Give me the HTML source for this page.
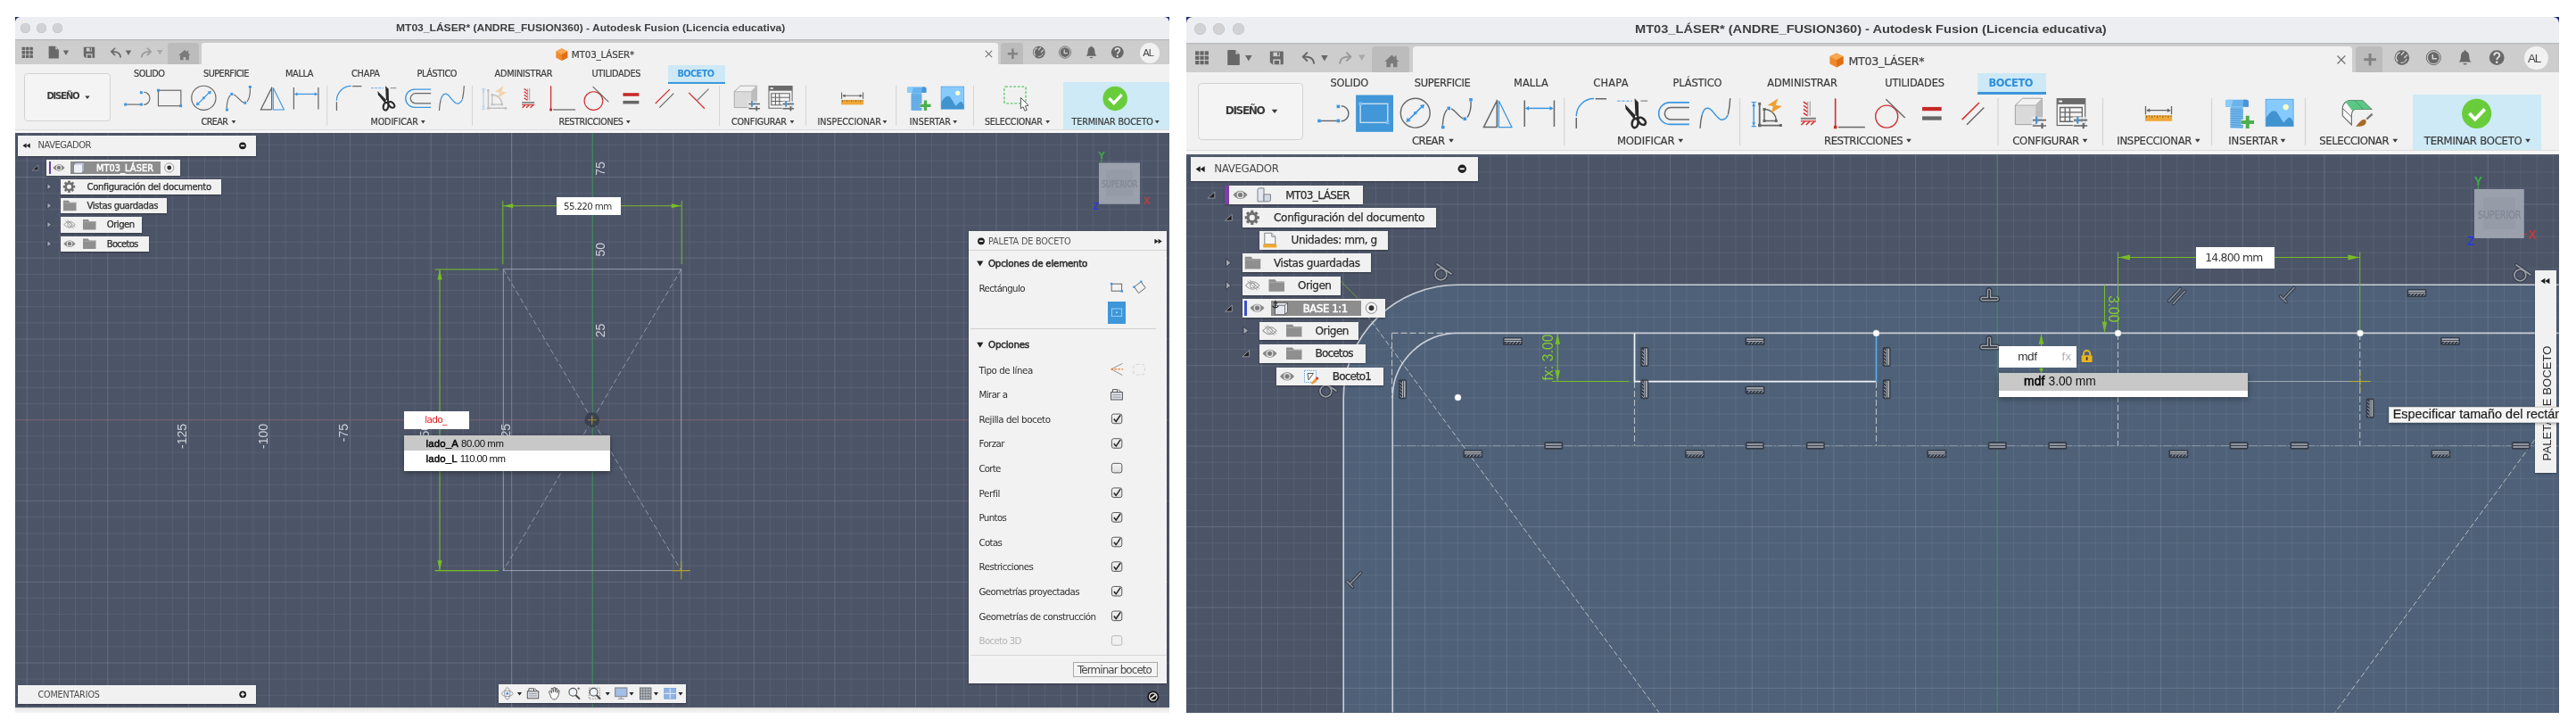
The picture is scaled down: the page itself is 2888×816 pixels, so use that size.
<!DOCTYPE html>
<html lang="es"><head><meta charset="utf-8"><title>MT03_LÁSER - Autodesk Fusion</title>
<style>
html,body{margin:0;padding:0;background:#fff;}
body{width:2888px;height:816px;position:relative;overflow:hidden;font-family:"Liberation Sans",sans-serif;}
svg{overflow:visible;}
</style></head><body>
<div class="win" style="position:absolute;left:0;top:0;width:2888px;height:816px;will-change:transform;clip-path:inset(19.30px 1577.50px 17.00px 17.00px);">
<div style="position:absolute;left:17.00px;top:148.40px;width:1293.50px;height:644.20px;background:#4c5568;"></div>
<div style="position:absolute;left:17.00px;top:792.60px;width:1293.50px;height:6.40px;background:linear-gradient(#d9d9d9,#eeeeee 45%,#f2f2f2);"></div>
<svg style="position:absolute;left:0.00px;top:0.00px;" width="2888.00" height="816.00" viewBox="0 0 2888 816"><path d="M48.39 148.40V792.60M66.50 148.40V792.60M84.62 148.40V792.60M102.73 148.40V792.60M138.95 148.40V792.60M157.06 148.40V792.60M175.18 148.40V792.60M193.29 148.40V792.60M229.51 148.40V792.60M247.62 148.40V792.60M265.74 148.40V792.60M283.85 148.40V792.60M320.07 148.40V792.60M338.18 148.40V792.60M356.30 148.40V792.60M374.41 148.40V792.60M410.63 148.40V792.60M428.74 148.40V792.60M446.86 148.40V792.60M464.97 148.40V792.60M501.19 148.40V792.60M519.30 148.40V792.60M537.42 148.40V792.60M555.53 148.40V792.60M591.75 148.40V792.60M609.86 148.40V792.60M627.98 148.40V792.60M646.09 148.40V792.60M682.31 148.40V792.60M700.42 148.40V792.60M718.54 148.40V792.60M736.65 148.40V792.60M772.87 148.40V792.60M790.98 148.40V792.60M809.10 148.40V792.60M827.21 148.40V792.60M863.43 148.40V792.60M881.54 148.40V792.60M899.66 148.40V792.60M917.77 148.40V792.60M953.99 148.40V792.60M972.10 148.40V792.60M990.22 148.40V792.60M1008.33 148.40V792.60M1044.55 148.40V792.60M1062.66 148.40V792.60M1080.78 148.40V792.60M1098.89 148.40V792.60M1135.11 148.40V792.60M1153.22 148.40V792.60M1171.34 148.40V792.60M1189.45 148.40V792.60M1225.67 148.40V792.60M1243.78 148.40V792.60M1261.90 148.40V792.60M1280.01 148.40V792.60M17.00 162.20H1310.50M17.00 180.35H1310.50M17.00 216.65H1310.50M17.00 234.80H1310.50M17.00 252.95H1310.50M17.00 271.10H1310.50M17.00 307.40H1310.50M17.00 325.55H1310.50M17.00 343.70H1310.50M17.00 361.85H1310.50M17.00 398.15H1310.50M17.00 416.30H1310.50M17.00 434.45H1310.50M17.00 452.60H1310.50M17.00 488.90H1310.50M17.00 507.05H1310.50M17.00 525.20H1310.50M17.00 543.35H1310.50M17.00 579.65H1310.50M17.00 597.80H1310.50M17.00 615.95H1310.50M17.00 634.10H1310.50M17.00 670.40H1310.50M17.00 688.55H1310.50M17.00 706.70H1310.50M17.00 724.85H1310.50M17.00 761.15H1310.50M17.00 779.30H1310.50" stroke="#fff" stroke-opacity="0.072" stroke-width="1" fill="none"/><path d="M30.28 148.40V792.60M120.84 148.40V792.60M211.40 148.40V792.60M301.96 148.40V792.60M392.52 148.40V792.60M483.08 148.40V792.60M573.64 148.40V792.60M664.20 148.40V792.60M754.76 148.40V792.60M845.32 148.40V792.60M935.88 148.40V792.60M1026.44 148.40V792.60M1117.00 148.40V792.60M1207.56 148.40V792.60M1298.12 148.40V792.60M17.00 198.50H1310.50M17.00 289.25H1310.50M17.00 380.00H1310.50M17.00 470.75H1310.50M17.00 561.50H1310.50M17.00 652.25H1310.50M17.00 743.00H1310.50" stroke="#fff" stroke-opacity="0.135" stroke-width="1" fill="none"/><path d="M664.4 148.4V792.6" stroke="#3d8a5a" stroke-width="1"/><path d="M17 470.75H1310.5" stroke="#9a5560" stroke-opacity="0.5" stroke-width="1"/><text transform="translate(677.5 196.75) rotate(-90)" font-family="Liberation Sans, sans-serif" font-size="14" fill="#ccd0d8">75</text><text transform="translate(677.5 287.50) rotate(-90)" font-family="Liberation Sans, sans-serif" font-size="14" fill="#ccd0d8">50</text><text transform="translate(677.5 378.25) rotate(-90)" font-family="Liberation Sans, sans-serif" font-size="14" fill="#ccd0d8">25</text><text transform="translate(208.85 475) rotate(-90)" text-anchor="end" font-family="Liberation Sans, sans-serif" font-size="14" fill="#ccd0d8">-125</text><text transform="translate(299.60 475) rotate(-90)" text-anchor="end" font-family="Liberation Sans, sans-serif" font-size="14" fill="#ccd0d8">-100</text><text transform="translate(390.35 475) rotate(-90)" text-anchor="end" font-family="Liberation Sans, sans-serif" font-size="14" fill="#ccd0d8">-75</text><text transform="translate(481.10 475) rotate(-90)" text-anchor="end" font-family="Liberation Sans, sans-serif" font-size="14" fill="#ccd0d8">-50</text><text transform="translate(571.85 475) rotate(-90)" text-anchor="end" font-family="Liberation Sans, sans-serif" font-size="14" fill="#ccd0d8">-25</text><rect x="564.25" y="301.75" width="199.5" height="337.85" fill="none" stroke="#aeb6c2" stroke-opacity="0.85" stroke-width="0.9"/><path d="M573.75 148.4V792.6" stroke="#fff" stroke-opacity="0.14" stroke-width="1"/><path d="M564.25 301.75L763.75 639.6M763.75 301.75L564.25 639.6" fill="none" stroke="#aab1bc" stroke-opacity="0.8" stroke-width="0.9" stroke-dasharray="6 3.5"/><circle cx="663.75" cy="470.75" r="8.4" fill="#383d4a" fill-opacity="0.85"/><path d="M658.75 470.75H668.75M663.75 465.75V475.75" stroke="#a8923c" stroke-width="1.1"/><path d="M563.75 225V296.25M764.25 225V296.25M563.75 230.75H764.25" stroke="#77bd27" stroke-width="1" fill="none"/><path d="M564.20 230.75L575.20 228.15L575.20 233.35Z" fill="#77bd27"/><path d="M763.80 230.75L752.80 233.35L752.80 228.15Z" fill="#77bd27"/><path d="M487.5 302H558.75M487.5 639.6H558.75M493 302V639.6" stroke="#77bd27" stroke-width="1.1" fill="none"/><path d="M493.00 302.40L495.60 313.40L490.40 313.40Z" fill="#77bd27"/><path d="M493.00 639.20L490.40 628.20L495.60 628.20Z" fill="#77bd27"/><path d="M753.75 639.6H773.75M763.75 629.6V649.6" stroke="#b0a030" stroke-width="1.1"/></svg>
<div style="position:absolute;left:623.75px;top:221.25px;width:72.50px;height:20.00px;background:#fff;"></div>
<span style='position:absolute;left:632.00px;top:225.27px;font:10.29px/12.35px "DejaVu Sans","Liberation Sans",sans-serif;letter-spacing:-0.633px;color:#333;white-space:nowrap;'>55.220 mm</span>
<div style="position:absolute;left:453.00px;top:460.75px;width:72.75px;height:20.00px;background:#fff;"></div>
<span style='position:absolute;left:476.25px;top:463.72px;font:10.60px/12.72px "DejaVu Sans","Liberation Sans",sans-serif;letter-spacing:-0.739px;color:#e02222;white-space:nowrap;'>lado_</span>
<div style="position:absolute;left:453.00px;top:487.50px;width:230.75px;height:40.50px;background:#fff;box-shadow:0 2px 6px rgba(0,0,0,0.35);"></div>
<div style="position:absolute;left:453.00px;top:487.50px;width:230.75px;height:17.50px;background:#c8c8c8;"></div>
<span style='position:absolute;left:477.50px;top:490.66px;font:11.40px/13.68px "Liberation Sans",sans-serif;letter-spacing:0.000px;color:#000;white-space:nowrap;-webkit-text-stroke:0.45px #000;letter-spacing:0.2px;'>lado_A</span>
<span style='position:absolute;left:517.00px;top:490.66px;font:11.40px/13.68px "Liberation Sans",sans-serif;letter-spacing:-0.384px;color:#111;white-space:nowrap;'>80.00 mm</span>
<span style='position:absolute;left:477.50px;top:508.16px;font:11.40px/13.68px "Liberation Sans",sans-serif;letter-spacing:0.000px;color:#000;white-space:nowrap;-webkit-text-stroke:0.45px #000;letter-spacing:0.2px;'>lado_L</span>
<span style='position:absolute;left:515.73px;top:508.16px;font:11.40px/13.68px "Liberation Sans",sans-serif;letter-spacing:-0.615px;color:#111;white-space:nowrap;'>110.00 mm</span>
<div style="position:absolute;left:20.00px;top:152.00px;width:267.00px;height:22.50px;background:#f1f1f1;box-shadow:0 0.5px 2px rgba(0,0,0,0.35);"></div>
<span style='position:absolute;left:42.50px;top:157.09px;font:9.95px/11.93px "DejaVu Sans","Liberation Sans",sans-serif;letter-spacing:-0.450px;color:#4a4a4a;white-space:nowrap;'>NAVEGADOR</span>
<div style="position:absolute;left:52.00px;top:179.25px;width:150.00px;height:17.50px;background:#f1f1f1;box-shadow:0 0.5px 2px rgba(0,0,0,0.35);"></div>
<div style="position:absolute;left:54.50px;top:180.58px;width:2.20px;height:14.85px;background:#6a3fa6;"></div>
<div style="position:absolute;left:78.75px;top:180.66px;width:100.75px;height:14.52px;background:#8d8d8d;"></div>
<span style='position:absolute;left:108.00px;top:183.23px;font:9.74px/11.69px "DejaVu Sans","Liberation Sans",sans-serif;letter-spacing:0.104px;color:#fff;white-space:nowrap;-webkit-text-stroke:0.5px #fff;'>MT03_LÁSER</span>
<div style="position:absolute;left:68.00px;top:200.50px;width:179.75px;height:17.50px;background:#f1f1f1;box-shadow:0 0.5px 2px rgba(0,0,0,0.35);"></div>
<span style='position:absolute;left:97.50px;top:203.51px;font:10.15px/12.18px "DejaVu Sans","Liberation Sans",sans-serif;letter-spacing:-0.378px;color:#2c2c2c;white-space:nowrap;-webkit-text-stroke:0.25px #2c2c2c;'>Configuración del documento</span>
<div style="position:absolute;left:68.00px;top:221.75px;width:118.75px;height:17.50px;background:#f1f1f1;box-shadow:0 0.5px 2px rgba(0,0,0,0.35);"></div>
<span style='position:absolute;left:97.50px;top:224.76px;font:10.15px/12.18px "DejaVu Sans","Liberation Sans",sans-serif;letter-spacing:-0.467px;color:#2c2c2c;white-space:nowrap;-webkit-text-stroke:0.25px #2c2c2c;'>Vistas guardadas</span>
<div style="position:absolute;left:68.00px;top:243.00px;width:91.25px;height:17.50px;background:#f1f1f1;box-shadow:0 0.5px 2px rgba(0,0,0,0.35);"></div>
<span style='position:absolute;left:119.75px;top:246.01px;font:10.15px/12.18px "DejaVu Sans","Liberation Sans",sans-serif;letter-spacing:-0.521px;color:#2c2c2c;white-space:nowrap;-webkit-text-stroke:0.25px #2c2c2c;'>Origen</span>
<div style="position:absolute;left:68.00px;top:264.50px;width:98.75px;height:17.50px;background:#f1f1f1;box-shadow:0 0.5px 2px rgba(0,0,0,0.35);"></div>
<span style='position:absolute;left:119.75px;top:267.51px;font:10.15px/12.18px "DejaVu Sans","Liberation Sans",sans-serif;letter-spacing:-0.788px;color:#2c2c2c;white-space:nowrap;-webkit-text-stroke:0.25px #2c2c2c;'>Bocetos</span>
<div style="position:absolute;left:20.30px;top:768.00px;width:266.60px;height:21.00px;background:#f1f1f1;box-shadow:0 0.5px 2px rgba(0,0,0,0.35);"></div>
<span style='position:absolute;left:42.40px;top:772.52px;font:9.60px/11.52px "DejaVu Sans","Liberation Sans",sans-serif;letter-spacing:-0.104px;color:#4a4a4a;white-space:nowrap;'>COMENTARIOS</span>
<div style="position:absolute;left:558.75px;top:766.75px;width:210.50px;height:21.25px;background:#f1f1f1;box-shadow:0 0.5px 2px rgba(0,0,0,0.35);"></div>
<div style="position:absolute;left:1085.75px;top:259.00px;width:222.25px;height:507.40px;background:#f2f2f2;box-shadow:0 0.5px 2px rgba(0,0,0,0.35);"></div>
<div style="position:absolute;left:1085.75px;top:280.40px;width:222.25px;height:1.00px;background:#d4d4d4;"></div>
<span style='position:absolute;left:1108.00px;top:265.09px;font:9.74px/11.69px "DejaVu Sans","Liberation Sans",sans-serif;letter-spacing:-0.213px;color:#565656;white-space:nowrap;'>PALETA DE BOCETO</span>
<span style='position:absolute;left:1108.00px;top:289.17px;font:10.29px/12.35px "DejaVu Sans","Liberation Sans",sans-serif;letter-spacing:-0.225px;color:#303030;white-space:nowrap;-webkit-text-stroke:0.55px #303030;'>Opciones de elemento</span>
<span style='position:absolute;left:1097.50px;top:316.52px;font:10.29px/12.35px "DejaVu Sans","Liberation Sans",sans-serif;letter-spacing:-0.637px;color:#2f2f2f;white-space:nowrap;'>Rectángulo</span>
<div style="position:absolute;left:1241.75px;top:338.00px;width:20.50px;height:25.00px;background:#3f97da;"></div>
<div style="position:absolute;left:1088.00px;top:368.30px;width:207.50px;height:1.00px;background:#cfcfcf;"></div>
<span style='position:absolute;left:1108.00px;top:380.47px;font:10.29px/12.35px "DejaVu Sans","Liberation Sans",sans-serif;letter-spacing:-0.200px;color:#303030;white-space:nowrap;-webkit-text-stroke:0.55px #303030;'>Opciones</span>
<span style='position:absolute;left:1097.50px;top:408.52px;font:10.29px/12.35px "DejaVu Sans","Liberation Sans",sans-serif;letter-spacing:-0.431px;color:#2f2f2f;white-space:nowrap;'>Tipo de línea</span>
<span style='position:absolute;left:1097.50px;top:436.14px;font:10.29px/12.35px "DejaVu Sans","Liberation Sans",sans-serif;letter-spacing:-0.596px;color:#2f2f2f;white-space:nowrap;'>Mirar a</span>
<span style='position:absolute;left:1097.50px;top:463.76px;font:10.29px/12.35px "DejaVu Sans","Liberation Sans",sans-serif;letter-spacing:-0.450px;color:#2f2f2f;white-space:nowrap;'>Rejilla del boceto</span>
<span style='position:absolute;left:1097.50px;top:491.38px;font:10.29px/12.35px "DejaVu Sans","Liberation Sans",sans-serif;letter-spacing:-0.622px;color:#2f2f2f;white-space:nowrap;'>Forzar</span>
<span style='position:absolute;left:1097.50px;top:519.00px;font:10.29px/12.35px "DejaVu Sans","Liberation Sans",sans-serif;letter-spacing:-0.818px;color:#2f2f2f;white-space:nowrap;'>Corte</span>
<span style='position:absolute;left:1097.50px;top:546.62px;font:10.29px/12.35px "DejaVu Sans","Liberation Sans",sans-serif;letter-spacing:-0.387px;color:#2f2f2f;white-space:nowrap;'>Perfil</span>
<span style='position:absolute;left:1097.50px;top:574.24px;font:10.29px/12.35px "DejaVu Sans","Liberation Sans",sans-serif;letter-spacing:-0.651px;color:#2f2f2f;white-space:nowrap;'>Puntos</span>
<span style='position:absolute;left:1097.50px;top:601.86px;font:10.29px/12.35px "DejaVu Sans","Liberation Sans",sans-serif;letter-spacing:-0.694px;color:#2f2f2f;white-space:nowrap;'>Cotas</span>
<span style='position:absolute;left:1097.50px;top:629.48px;font:10.29px/12.35px "DejaVu Sans","Liberation Sans",sans-serif;letter-spacing:-0.556px;color:#2f2f2f;white-space:nowrap;'>Restricciones</span>
<span style='position:absolute;left:1097.50px;top:657.10px;font:10.29px/12.35px "DejaVu Sans","Liberation Sans",sans-serif;letter-spacing:-0.635px;color:#2f2f2f;white-space:nowrap;'>Geometrías proyectadas</span>
<span style='position:absolute;left:1097.50px;top:684.72px;font:10.29px/12.35px "DejaVu Sans","Liberation Sans",sans-serif;letter-spacing:-0.522px;color:#2f2f2f;white-space:nowrap;'>Geometrías de construcción</span>
<span style='position:absolute;left:1097.50px;top:712.34px;font:10.29px/12.35px "DejaVu Sans","Liberation Sans",sans-serif;letter-spacing:-0.676px;color:#b4b4b4;white-space:nowrap;'>Boceto 3D</span>
<div style="position:absolute;left:1088.00px;top:734.00px;width:220.00px;height:1.00px;background:#d8d8d8;"></div>
<div style="position:absolute;left:1203.25px;top:741.75px;width:94.25px;height:17.25px;background:#f4f4f4;border:1px solid #a8a8a8;box-sizing:border-box;"></div>
<span style='position:absolute;left:1208.00px;top:743.71px;font:11.93px/14.32px "DejaVu Sans","Liberation Sans",sans-serif;letter-spacing:-0.899px;color:#4a4a4a;white-space:nowrap;'>Terminar boceto</span>
<svg style="position:absolute;left:0.00px;top:0.00px;" width="2888.00" height="816.00" viewBox="0 0 2888 816"><path d="M25.46 163.30 L29.60 160.57 L29.60 166.03Z" fill="#1e1e1e"/><path d="M29.60 163.30 L33.74 160.57 L33.74 166.03Z" fill="#1e1e1e"/><circle cx="272.00" cy="163.30" r="3.90" fill="#1e1e1e"/><path d="M269.86 163.30H274.14" stroke="#f0f0f0" stroke-width="1.64"/><path d="M36.50 190.82 L42.80 190.82 L42.80 185.02Z" fill="#1e1e1e" stroke="#b4b8c0" stroke-width="0.58"/><path d="M59.37 188.00 Q66.00 180.38 72.63 188.00 Q66.00 195.62 59.37 188.00Z" fill="#858585"/><circle cx="66.00" cy="188.00" r="2.73" fill="none" stroke="#e4e4e4" stroke-width="1.08"/><circle cx="66.00" cy="188.00" r="1.24" fill="#777"/><path d="M84.99 182.20 L93.60 182.20 Q94.43 182.20 94.43 183.03 L94.43 190.98 L91.94 193.80 L83.33 193.80 Q82.50 193.80 82.50 192.97 L82.50 185.02Z" fill="#c9cfdb" stroke="#5a5f6a" stroke-width="0.58"/><rect x="82.91" y="184.69" width="9.11" height="8.78" rx="1.33" fill="#eef1f6"/><path d="M92.11 184.69 L94.26 182.53 L94.26 190.82 L92.11 193.30Z" fill="#a9b0be"/><circle cx="189.75" cy="188.00" r="5.14" fill="#f4f4f4" stroke="#8a8a8a" stroke-width="0.83"/><circle cx="189.75" cy="188.00" r="2.40" fill="#333"/><path d="M81.23 209.25 L84.21 209.25" stroke="#6f6f6f" stroke-width="2.73"/><path d="M80.14 211.89 L82.25 214.00" stroke="#6f6f6f" stroke-width="2.73"/><path d="M77.50 212.98 L77.50 215.96" stroke="#6f6f6f" stroke-width="2.73"/><path d="M74.86 211.89 L72.75 214.00" stroke="#6f6f6f" stroke-width="2.73"/><path d="M73.77 209.25 L70.79 209.25" stroke="#6f6f6f" stroke-width="2.73"/><path d="M74.86 206.61 L72.75 204.50" stroke="#6f6f6f" stroke-width="2.73"/><path d="M77.50 205.52 L77.50 202.54" stroke="#6f6f6f" stroke-width="2.73"/><path d="M80.14 206.61 L82.25 204.50" stroke="#6f6f6f" stroke-width="2.73"/><circle cx="77.50" cy="209.25" r="3.81" fill="none" stroke="#6f6f6f" stroke-width="2.49"/><path d="M53.00 205.44 L57.47 209.25 L53.00 213.06Z" fill="#a4a9b4" stroke="#2f3440" stroke-width="0.75"/><path d="M71.00 224.87 L76.80 224.87 L78.13 226.69 L85.50 226.69 L85.50 236.13 L71.00 236.13Z" fill="#8f8f8f"/><path d="M71.50 227.52 L85.50 227.52" stroke="#b4b4b4" stroke-width="0.66"/><path d="M53.00 226.69 L57.47 230.50 L53.00 234.31Z" fill="#a4a9b4" stroke="#2f3440" stroke-width="0.75"/><path d="M71.70 251.75 Q78.00 244.79 84.30 251.75 Q78.00 258.71 71.70 251.75Z" fill="none" stroke="#9a9a9a" stroke-width="0.91"/><circle cx="78.00" cy="251.75" r="2.40" fill="none" stroke="#9a9a9a" stroke-width="0.83"/><path d="M73.36 247.44 L82.64 256.06 M75.35 246.61 L84.30 254.73" stroke="#9a9a9a" stroke-width="0.83"/><path d="M93.00 246.12 L98.80 246.12 L100.13 247.94 L107.50 247.94 L107.50 257.38 L93.00 257.38Z" fill="#8f8f8f"/><path d="M93.50 248.77 L107.50 248.77" stroke="#b4b4b4" stroke-width="0.66"/><path d="M53.00 247.94 L57.47 251.75 L53.00 255.56Z" fill="#a4a9b4" stroke="#2f3440" stroke-width="0.75"/><path d="M71.37 273.25 Q78.00 265.63 84.63 273.25 Q78.00 280.87 71.37 273.25Z" fill="#858585"/><circle cx="78.00" cy="273.25" r="2.73" fill="none" stroke="#e4e4e4" stroke-width="1.08"/><circle cx="78.00" cy="273.25" r="1.24" fill="#777"/><path d="M93.00 267.62 L98.80 267.62 L100.13 269.44 L107.50 269.44 L107.50 278.88 L93.00 278.88Z" fill="#8f8f8f"/><path d="M93.50 270.27 L107.50 270.27" stroke="#b4b4b4" stroke-width="0.66"/><path d="M53.00 269.44 L57.47 273.25 L53.00 277.06Z" fill="#a4a9b4" stroke="#2f3440" stroke-width="0.75"/><circle cx="272.20" cy="778.30" r="3.90" fill="#1e1e1e"/><path d="M270.06 778.30H274.34" stroke="#f0f0f0" stroke-width="1.64"/><path d="M272.20 776.15V780.44" stroke="#f0f0f0" stroke-width="1.64"/><rect x="1232" y="182.5" width="46" height="46.25" fill="#9fa5b0" fill-opacity="0.95"/><rect x="1240" y="190.5" width="30" height="29.5" fill="#959ca9" fill-opacity="0.9"/><text x="1234.7" y="210.2" font-family="DejaVu Sans Condensed, DejaVu Sans, sans-serif" font-size="9.6" fill="#838995" stroke="#838995" stroke-width="0.35" textLength="40.6" lengthAdjust="spacingAndGlyphs">SUPERIOR</text><text x="1231.3" y="177.8" font-family="Liberation Sans, sans-serif" font-size="11.5" font-weight="bold" fill="#3cb043">Y</text><path d="M1235 178.5V182.5" stroke="#3cb043" stroke-width="1"/><text x="1281.8" y="229.2" font-family="Liberation Sans, sans-serif" font-size="11.5" font-weight="bold" fill="#c43a3a">X</text><text x="1225.2" y="235.4" font-family="Liberation Sans, sans-serif" font-size="11.5" font-weight="bold" fill="#2a3ad8">Z</text><ellipse cx="568.75" cy="777.4" rx="6.2" ry="3.2" fill="none" stroke="#9a9a9a" stroke-width="1"/><ellipse cx="568.75" cy="777.4" rx="3.1" ry="6.6" fill="none" stroke="#9a9a9a" stroke-width="1"/><circle cx="568.75" cy="777.4" r="1.3" fill="#3a8ee6"/><path d="M579.92 776.10L585.08 776.10L582.50 779.60Z" fill="#222"/><rect x="591.3" y="774.8" width="12.4" height="8" fill="#dfe3e8" stroke="#555" stroke-width="1"/><path d="M592.9 774.8V771.8H598.5V774.8M599.5 771.6L602.1 774.4" fill="none" stroke="#555" stroke-width="1"/><path d="M593.1 777.6H601.9M593.1 780.0H601.9" stroke="#8a8f98" stroke-width="0.9"/><path d="M616.65 778.4 L615.25 775.0 L616.85 774.4 L618.45 776.8 L618.05 771.6 L619.65 771.4 L620.45 775.8 L620.85 770.6 L622.45 770.6 L622.65 775.8 L623.65 771.4 L625.05 771.8 L624.65 776.6 L626.05 773.6 L627.25 774.1999999999999 L625.85 779.8 Q624.85 784.0 620.85 784.0 Q617.65 783.6 616.65 778.4Z" fill="#fafafa" stroke="#555" stroke-width="0.9" stroke-linejoin="round"/><circle cx="642.35" cy="775.8" r="4.4" fill="#eef4fa" stroke="#555" stroke-width="1.1"/><path d="M645.55 779.1999999999999L649.95 783.6" stroke="#444" stroke-width="2"/><path d="M647.35 771.8H650.15M648.75 770.4V773.1999999999999" stroke="#555" stroke-width="0.8"/><rect x="660.4" y="771.1999999999999" width="12" height="12" fill="none" stroke="#777" stroke-width="0.8" stroke-dasharray="1.6 1.2"/><circle cx="665.6" cy="775.8" r="4.4" fill="#eef4fa" stroke="#555" stroke-width="1.1"/><path d="M668.8 779.1999999999999L673.2 783.6" stroke="#444" stroke-width="2"/><path d="M678.67 776.10L683.83 776.10L681.25 779.60Z" fill="#222"/><rect x="689.65" y="771.0" width="13.2" height="9.6" fill="#a2bfe8" stroke="#8a8f98" stroke-width="1.3"/><path d="M692.85 783.4H699.65M696.25 780.6V783.4" stroke="#9a9fa8" stroke-width="1.3"/><path d="M705.42 776.10L710.58 776.10L708.00 779.60Z" fill="#222"/><rect x="717.55" y="771.0" width="12.4" height="12.8" fill="#b4b8be" stroke="#5a5f68" stroke-width="0.9"/><path d="M720.65 771.0V783.8M723.75 771.0V783.8M726.85 771.0V783.8M717.55 774.1999999999999H729.95M717.55 777.4H729.95M717.55 780.6H729.95" stroke="#5f646c" stroke-width="0.6"/><path d="M732.92 776.10L738.08 776.10L735.50 779.60Z" fill="#222"/><rect x="744.85" y="771.6" width="12.8" height="11.6" fill="#8db3e6" stroke="#6f9ad6" stroke-width="0.8"/><path d="M751.25 771.6V783.1999999999999M744.85 777.4H757.65" stroke="#dbe6f6" stroke-width="1.1"/><path d="M760.42 776.10L765.58 776.10L763.00 779.60Z" fill="#222"/><circle cx="1292.8" cy="781" r="6.6" fill="#141414"/><circle cx="1292.8" cy="781" r="4.2" fill="none" stroke="#f0f0f0" stroke-width="1.2"/><path d="M1290 783.2L1295.6 778.6" stroke="#f0f0f0" stroke-width="1.6"/><defs><linearGradient id="cbg" x1="0" y1="0" x2="0" y2="1"><stop offset="0" stop-color="#f6f6f6"/><stop offset="1" stop-color="#dcdcdc"/></linearGradient></defs><circle cx="1100.00" cy="270.30" r="3.90" fill="#1e1e1e"/><path d="M1097.86 270.30H1102.14" stroke="#f0f0f0" stroke-width="1.64"/><path d="M1298.57 270.40 L1294.42 267.67 L1294.42 273.13Z" fill="#1e1e1e"/><path d="M1302.71 270.40 L1298.57 267.67 L1298.57 273.13Z" fill="#1e1e1e"/><path d="M1095.15 292.60H1102.35L1098.75 298.60Z" fill="#222"/><path d="M1095.15 383.80H1102.35L1098.75 389.80Z" fill="#222"/><rect x="1246.2" y="318.2" width="11.4" height="8" fill="none" stroke="#666" stroke-width="1"/><rect x="1244.9" y="316.9" width="2.4" height="2.4" fill="#3a96e6"/><rect x="1256.6" y="325.2" width="2.4" height="2.4" fill="#3a96e6"/><path d="M1271.6 321.6L1279.2 315.8L1284.2 322.6L1276.6 328.6Z" fill="none" stroke="#666" stroke-width="1"/><rect x="1270.2" y="320.6" width="2.2" height="2.2" fill="#3a96e6"/><rect x="1278.2" y="314.6" width="2.2" height="2.2" fill="#3a96e6"/><rect x="1246.4" y="346" width="11.2" height="8.4" fill="none" stroke="#a9d2f2" stroke-width="0.9"/><rect x="1251.2" y="349.4" width="1.6" height="1.6" fill="#cfe6f8"/><rect x="1246.40" y="464.09" width="11.40" height="10.60" rx="2.2" fill="url(#cbg)" stroke="#5a5a5a" stroke-width="1"/><path d="M1248.80 469.60L1251.19 472.49L1256.20 465.29" fill="none" stroke="#222" stroke-width="1.5"/><rect x="1246.40" y="491.71" width="11.40" height="10.60" rx="2.2" fill="url(#cbg)" stroke="#5a5a5a" stroke-width="1"/><path d="M1248.80 497.22L1251.19 500.11L1256.20 492.91" fill="none" stroke="#222" stroke-width="1.5"/><rect x="1246.40" y="519.33" width="11.40" height="10.60" rx="2.2" fill="url(#cbg)" stroke="#5a5a5a" stroke-width="1"/><rect x="1246.40" y="546.95" width="11.40" height="10.60" rx="2.2" fill="url(#cbg)" stroke="#5a5a5a" stroke-width="1"/><path d="M1248.80 552.46L1251.19 555.35L1256.20 548.15" fill="none" stroke="#222" stroke-width="1.5"/><rect x="1246.40" y="574.57" width="11.40" height="10.60" rx="2.2" fill="url(#cbg)" stroke="#5a5a5a" stroke-width="1"/><path d="M1248.80 580.08L1251.19 582.97L1256.20 575.77" fill="none" stroke="#222" stroke-width="1.5"/><rect x="1246.40" y="602.19" width="11.40" height="10.60" rx="2.2" fill="url(#cbg)" stroke="#5a5a5a" stroke-width="1"/><path d="M1248.80 607.70L1251.19 610.59L1256.20 603.39" fill="none" stroke="#222" stroke-width="1.5"/><rect x="1246.40" y="629.81" width="11.40" height="10.60" rx="2.2" fill="url(#cbg)" stroke="#5a5a5a" stroke-width="1"/><path d="M1248.80 635.32L1251.19 638.21L1256.20 631.01" fill="none" stroke="#222" stroke-width="1.5"/><rect x="1246.40" y="657.43" width="11.40" height="10.60" rx="2.2" fill="url(#cbg)" stroke="#5a5a5a" stroke-width="1"/><path d="M1248.80 662.94L1251.19 665.83L1256.20 658.63" fill="none" stroke="#222" stroke-width="1.5"/><rect x="1246.40" y="685.05" width="11.40" height="10.60" rx="2.2" fill="url(#cbg)" stroke="#5a5a5a" stroke-width="1"/><path d="M1248.80 690.56L1251.19 693.45L1256.20 686.25" fill="none" stroke="#222" stroke-width="1.5"/><rect x="1246.40" y="712.67" width="11.40" height="10.60" rx="2.2" fill="#f0f0f0" stroke="#b8b8b8" stroke-width="1"/><path d="M1258.4 407.4L1246 413.8L1258.4 420.6" fill="none" stroke="#8a8a8a" stroke-width="0.9"/><path d="M1245.4 413.8H1259.2" stroke="#f07820" stroke-width="1.2" stroke-dasharray="2.6 1.4"/><path d="M1273.6 408.2H1280.4Q1283.4 408.2 1283.4 411.2V417Q1283.4 420 1280.4 420H1273.6Q1270.8 420 1270.8 417V411.2Q1270.8 408.2 1273.6 408.2Z" fill="none" stroke="#d6d6d6" stroke-width="1.1" stroke-dasharray="4 2.2"/><rect x="1245.6" y="439.6" width="12.8" height="8.4" fill="#dfe3e8" stroke="#555" stroke-width="1"/><path d="M1247.4 439.6V436.6H1252.6V439.6M1253.8 436.4L1256.6 439.2" fill="none" stroke="#555" stroke-width="1"/><path d="M1247.4 442.6H1256.6M1247.4 445.2H1256.6" stroke="#8a8f98" stroke-width="0.9"/></svg>
<div style="position:absolute;left:17.00px;top:19.30px;width:8.00px;height:8.00px;background:#1c2a78;"></div>
<div style="position:absolute;left:1302.50px;top:19.30px;width:8.00px;height:8.00px;background:#1c2a78;"></div>
<div style="position:absolute;left:17.00px;top:19.30px;width:1293.50px;height:24.70px;background:#edeef1;border-radius:5.8px 5.8px 0 0;"></div>
<div style="position:absolute;left:23.25px;top:26.25px;width:11.00px;height:11.00px;background:#d2d2d4;border-radius:50%;box-shadow:inset 0 0 0 0.6px #c2c2c4;"></div>
<div style="position:absolute;left:41.00px;top:26.25px;width:11.00px;height:11.00px;background:#d2d2d4;border-radius:50%;box-shadow:inset 0 0 0 0.6px #c2c2c4;"></div>
<div style="position:absolute;left:59.00px;top:26.25px;width:11.00px;height:11.00px;background:#d2d2d4;border-radius:50%;box-shadow:inset 0 0 0 0.6px #c2c2c4;"></div>
<span style='position:absolute;left:443.50px;top:25.42px;font:bold 11.17px/13.41px "Liberation Sans",sans-serif;letter-spacing:0.000px;color:#3e3e3e;white-space:nowrap;transform:scaleX(1.0806);transform-origin:0 0;'>MT03_LÁSER* (ANDRE_FUSION360) - Autodesk Fusion (Licencia educativa)</span>
<div style="position:absolute;left:17.00px;top:44.00px;width:1293.50px;height:101.00px;background:#f1f1f1;"></div>
<div style="position:absolute;left:17.00px;top:145.00px;width:1293.50px;height:4.00px;background:#f6f6f6;border-top:1px solid #dcdcdc;box-sizing:border-box;"></div>
<div style="position:absolute;left:17.00px;top:44.00px;width:1293.50px;height:28.40px;background:#cdcdcd;box-shadow:inset 0 1.5px 1.5px -0.5px #b4b4b4;"></div>
<div style="position:absolute;left:188.00px;top:47.50px;width:34.50px;height:24.90px;background:#bcbcbc;border-radius:2.9px 2.9px 0 0;"></div>
<div style="position:absolute;left:226.00px;top:47.50px;width:892.50px;height:25.90px;background:#f1f1f1;border-radius:3.3px 3.3px 0 0;"></div>
<div style="position:absolute;left:1122.00px;top:47.50px;width:24.50px;height:24.90px;background:#bcbcbc;border-radius:2.9px 2.9px 0 0;"></div>
<div style="position:absolute;left:1277.80px;top:48.20px;width:22.40px;height:22.40px;background:#f1f1f1;border-radius:50%;"></div>
<span style='position:absolute;left:1281.29px;top:53.40px;font:11.11px/13.33px "Liberation Sans",sans-serif;letter-spacing:-0.912px;color:#444;white-space:nowrap;'>AL</span>
<svg style="position:absolute;left:0.00px;top:0.00px;pointer-events:none;" width="2888.00" height="816.00" viewBox="0 0 2888 816"><rect x="24.58" y="52.73" width="3.56" height="3.56" rx="0.41" fill="#686868"/><rect x="28.97" y="52.73" width="3.56" height="3.56" rx="0.41" fill="#686868"/><rect x="33.36" y="52.73" width="3.56" height="3.56" rx="0.41" fill="#686868"/><rect x="24.58" y="57.12" width="3.56" height="3.56" rx="0.41" fill="#686868"/><rect x="28.97" y="57.12" width="3.56" height="3.56" rx="0.41" fill="#686868"/><rect x="33.36" y="57.12" width="3.56" height="3.56" rx="0.41" fill="#686868"/><rect x="24.58" y="61.51" width="3.56" height="3.56" rx="0.41" fill="#686868"/><rect x="28.97" y="61.51" width="3.56" height="3.56" rx="0.41" fill="#686868"/><rect x="33.36" y="61.51" width="3.56" height="3.56" rx="0.41" fill="#686868"/><path d="M54.62 52.52 Q54.62 51.69 55.44 51.69 L61.74 51.69 L65.88 55.83 L65.88 65.61 L54.62 65.61 Z" fill="#686868"/><path d="M62.24 52.52 L62.24 55.34 L65.06 55.34 Z" fill="#cdcdcd"/><path d="M70.85 56.58 L77.15 56.58 L74.00 61.88 Z" fill="#686868"/><path d="M93.79 53.60 Q93.79 52.77 94.61 52.77 L105.39 52.77 Q106.21 52.77 106.21 53.60 L106.21 65.03 L95.86 65.03 L93.79 62.96 Z" fill="#686868"/><rect x="96.77" y="53.76" width="6.13" height="3.81" fill="#cdcdcd"/><rect x="100.58" y="53.76" width="1.49" height="2.98" fill="#686868"/><path d="M97.27 65.03 L97.27 60.89 L102.90 60.89 L102.90 65.03" fill="none" stroke="#cdcdcd" stroke-width="1.24"/><path d="M125.53 57.91 C130.00 57.74 134.64 58.82 135.14 63.87" fill="none" stroke="#686868" stroke-width="1.66" stroke-linecap="round"/><path d="M128.67 54.26 L124.86 57.91 L128.67 61.55" fill="none" stroke="#686868" stroke-width="1.66" stroke-linecap="round" stroke-linejoin="round"/><path d="M140.85 56.58 L147.15 56.58 L144.00 61.88 Z" fill="#686868"/><path d="M168.47 57.91 C164.00 57.74 159.36 58.82 158.86 63.87" fill="none" stroke="#9a9a9a" stroke-width="1.66" stroke-linecap="round"/><path d="M165.33 54.26 L169.14 57.91 L165.33 61.55" fill="none" stroke="#9a9a9a" stroke-width="1.66" stroke-linecap="round" stroke-linejoin="round"/><path d="M176.15 56.08 L182.45 56.08 L179.30 61.39 Z" fill="#a8a8a8"/><path d="M200.27 62.10 L206.90 55.88 L209.55 58.37 L209.55 56.63 L211.21 56.63 L211.21 59.94 L213.53 62.10 L211.87 62.10 L211.87 67.23 L208.23 67.23 L208.23 63.92 L205.57 63.92 L205.57 67.23 L201.93 67.23 L201.93 62.10 Z" fill="#7a7a7a"/><path d="M1104.85 56.85 L1112.15 64.15 M1112.15 56.85 L1104.85 64.15" stroke="#777" stroke-width="1.12" fill="none"/><path d="M1129.77 60.25 L1141.03 60.25 M1135.40 54.62 L1135.40 65.89" stroke="#828282" stroke-width="2.49" fill="none"/><circle cx="1164.75" cy="58.60" r="6.88" fill="#686868"/><path d="M1160.94 62.25 A4.97 4.97 0 0 1 1163.09 53.71" fill="none" stroke="#cdcdcd" stroke-width="1.24"/><path d="M1166.57 53.46 L1164.42 55.78 M1169.56 56.28 L1167.24 58.43" stroke="#cdcdcd" stroke-width="1.24" stroke-linecap="round" fill="none"/><path d="M1160.28 63.24 L1158.45 65.06" stroke="#cdcdcd" stroke-width="1.66" fill="none"/><path d="M1169.06 59.76 A4.64 4.64 0 0 1 1163.76 63.24" fill="none" stroke="#cdcdcd" stroke-width="0.99"/><circle cx="1194.00" cy="58.60" r="6.63" fill="none" stroke="#686868" stroke-width="0.83"/><circle cx="1194.00" cy="58.60" r="5.30" fill="#686868"/><path d="M1193.17 55.62 L1193.17 59.59 L1196.98 59.59" fill="none" stroke="#d4d4d4" stroke-width="1.24"/><path d="M1217.70 62.74 C1219.69 61.09 1219.52 58.60 1219.69 56.61 C1219.85 53.96 1221.51 52.80 1222.75 52.63 L1222.75 51.64 L1224.25 51.64 L1224.25 52.63 C1225.49 52.80 1227.15 53.96 1227.31 56.61 C1227.48 58.60 1227.31 61.09 1229.30 62.74 Z" fill="#686868"/><path d="M1221.68 63.90 L1225.32 63.90 C1225.16 65.56 1221.84 65.56 1221.68 63.90 Z" fill="#686868"/><circle cx="1252.75" cy="58.60" r="6.96" fill="#686868"/><path d="M1250.35 56.61 C1250.35 53.30 1255.40 53.30 1255.32 56.45 C1255.24 58.43 1252.75 58.43 1252.75 60.59" fill="none" stroke="#e6e6e6" stroke-width="1.57"/><circle cx="1252.75" cy="62.91" r="1.04" fill="#e6e6e6"/></svg>
<span style='position:absolute;left:640.80px;top:55.14px;font:10.43px/12.51px "DejaVu Sans","Liberation Sans",sans-serif;letter-spacing:-0.218px;color:#444;white-space:nowrap;-webkit-text-stroke:0.2px #444;'>MT03_LÁSER*</span>
<svg style="position:absolute;left:622.50px;top:54.30px;" width="13.60" height="14.42" viewBox="0 0 16 17"><path d="M8 0.4 L15.6 4.2 L15.6 12.6 L8 16.6 L0.4 12.6 L0.4 4.2 Z" fill="#f08a2a"/><path d="M8 0.4 L15.6 4.2 L8 8.2 L0.4 4.2 Z" fill="#f7a850"/><path d="M8 8.2 L15.6 4.2 L15.6 12.6 L8 16.6 Z" fill="#e06f14"/></svg>
<div style="position:absolute;left:27.00px;top:82.00px;width:97.30px;height:54.30px;background:#f4f4f4;border:1px solid #d2d2d2;border-radius:3.7px;box-sizing:border-box;"></div>
<span style='position:absolute;left:52.50px;top:102.30px;font:bold 10.15px/12.18px "DejaVu Sans","Liberation Sans",sans-serif;letter-spacing:-1.295px;color:#3a3a3a;white-space:nowrap;'>DISEÑO</span>
<svg style="position:absolute;left:0.00px;top:0.00px;pointer-events:none;" width="2888.00" height="816.00" viewBox="0 0 2888 816"><path d="M95.27 107.43 L100.73 107.43 L98.00 110.91 Z" fill="#3a3a3a"/></svg>
<div style="position:absolute;left:749.00px;top:73.00px;width:63.75px;height:20.90px;background:#cde9f6;border-bottom:2.5px solid #3f97d9;box-sizing:border-box;"></div>
<span style='position:absolute;left:150.00px;top:77.29px;font:9.74px/11.69px "DejaVu Sans","Liberation Sans",sans-serif;letter-spacing:-0.462px;color:#3c3c3c;white-space:nowrap;-webkit-text-stroke:0.2px #3c3c3c;'>SOLIDO</span>
<span style='position:absolute;left:228.00px;top:77.29px;font:9.74px/11.69px "DejaVu Sans","Liberation Sans",sans-serif;letter-spacing:-0.545px;color:#3c3c3c;white-space:nowrap;-webkit-text-stroke:0.2px #3c3c3c;'>SUPERFICIE</span>
<span style='position:absolute;left:320.00px;top:77.29px;font:9.74px/11.69px "DejaVu Sans","Liberation Sans",sans-serif;letter-spacing:-0.326px;color:#3c3c3c;white-space:nowrap;-webkit-text-stroke:0.2px #3c3c3c;'>MALLA</span>
<span style='position:absolute;left:394.00px;top:77.29px;font:9.74px/11.69px "DejaVu Sans","Liberation Sans",sans-serif;letter-spacing:-0.175px;color:#3c3c3c;white-space:nowrap;-webkit-text-stroke:0.2px #3c3c3c;'>CHAPA</span>
<span style='position:absolute;left:467.50px;top:77.29px;font:9.74px/11.69px "DejaVu Sans","Liberation Sans",sans-serif;letter-spacing:-0.379px;color:#3c3c3c;white-space:nowrap;-webkit-text-stroke:0.2px #3c3c3c;'>PLÁSTICO</span>
<span style='position:absolute;left:554.50px;top:77.29px;font:9.74px/11.69px "DejaVu Sans","Liberation Sans",sans-serif;letter-spacing:-0.253px;color:#3c3c3c;white-space:nowrap;-webkit-text-stroke:0.2px #3c3c3c;'>ADMINISTRAR</span>
<span style='position:absolute;left:663.50px;top:77.29px;font:9.74px/11.69px "DejaVu Sans","Liberation Sans",sans-serif;letter-spacing:-0.342px;color:#3c3c3c;white-space:nowrap;-webkit-text-stroke:0.2px #3c3c3c;'>UTILIDADES</span>
<span style='position:absolute;left:759.50px;top:77.29px;font:bold 9.74px/11.69px "DejaVu Sans","Liberation Sans",sans-serif;letter-spacing:-0.585px;color:#2e8fdb;white-space:nowrap;'>BOCETO</span>
<div style="position:absolute;left:1191.50px;top:92.00px;width:119.00px;height:53.00px;background:#cdeaf6;"></div>
<span style='position:absolute;left:225.50px;top:131.02px;font:9.60px/11.52px "DejaVu Sans","Liberation Sans",sans-serif;letter-spacing:-0.546px;color:#3c3c3c;white-space:nowrap;-webkit-text-stroke:0.2px #3c3c3c;'>CREAR</span>
<span style='position:absolute;left:415.50px;top:131.02px;font:9.60px/11.52px "DejaVu Sans","Liberation Sans",sans-serif;letter-spacing:-0.109px;color:#3c3c3c;white-space:nowrap;-webkit-text-stroke:0.2px #3c3c3c;'>MODIFICAR</span>
<span style='position:absolute;left:626.40px;top:131.02px;font:9.60px/11.52px "DejaVu Sans","Liberation Sans",sans-serif;letter-spacing:-0.396px;color:#3c3c3c;white-space:nowrap;-webkit-text-stroke:0.2px #3c3c3c;'>RESTRICCIONES</span>
<span style='position:absolute;left:820.00px;top:131.02px;font:9.60px/11.52px "DejaVu Sans","Liberation Sans",sans-serif;letter-spacing:-0.199px;color:#3c3c3c;white-space:nowrap;-webkit-text-stroke:0.2px #3c3c3c;'>CONFIGURAR</span>
<span style='position:absolute;left:916.50px;top:131.02px;font:9.60px/11.52px "DejaVu Sans","Liberation Sans",sans-serif;letter-spacing:-0.063px;color:#3c3c3c;white-space:nowrap;-webkit-text-stroke:0.2px #3c3c3c;'>INSPECCIONAR</span>
<span style='position:absolute;left:1019.75px;top:131.02px;font:9.60px/11.52px "DejaVu Sans","Liberation Sans",sans-serif;letter-spacing:-0.037px;color:#3c3c3c;white-space:nowrap;-webkit-text-stroke:0.2px #3c3c3c;'>INSERTAR</span>
<span style='position:absolute;left:1104.00px;top:131.02px;font:9.60px/11.52px "DejaVu Sans","Liberation Sans",sans-serif;letter-spacing:-0.280px;color:#3c3c3c;white-space:nowrap;-webkit-text-stroke:0.2px #3c3c3c;'>SELECCIONAR</span>
<span style='position:absolute;left:1201.50px;top:131.02px;font:9.60px/11.52px "DejaVu Sans","Liberation Sans",sans-serif;letter-spacing:-0.134px;color:#3c3c3c;white-space:nowrap;-webkit-text-stroke:0.2px #3c3c3c;'>TERMINAR BOCETO</span>
<svg style="position:absolute;left:0.00px;top:0.00px;pointer-events:none;" width="2888.00" height="816.00" viewBox="0 0 2888 816"><path d="M259.68 135.11 L264.32 135.11 L262.00 138.42 Z" fill="#3c3c3c"/><path d="M471.98 135.11 L476.62 135.11 L474.30 138.42 Z" fill="#3c3c3c"/><path d="M701.98 135.11 L706.62 135.11 L704.30 138.42 Z" fill="#3c3c3c"/><path d="M885.68 135.11 L890.32 135.11 L888.00 138.42 Z" fill="#3c3c3c"/><path d="M989.68 135.11 L994.32 135.11 L992.00 138.42 Z" fill="#3c3c3c"/><path d="M1068.38 135.11 L1073.02 135.11 L1070.70 138.42 Z" fill="#3c3c3c"/><path d="M1172.28 135.11 L1176.92 135.11 L1174.60 138.42 Z" fill="#3c3c3c"/><path d="M1294.98 135.11 L1299.62 135.11 L1297.30 138.42 Z" fill="#3c3c3c"/><path d="M366.75 96.00 L366.75 141.00" stroke="#d6d6d6" stroke-width="1.08"/><path d="M529.50 96.00 L529.50 141.00" stroke="#d6d6d6" stroke-width="1.08"/><path d="M806.50 96.00 L806.50 141.00" stroke="#d6d6d6" stroke-width="1.08"/><path d="M903.50 96.00 L903.50 141.00" stroke="#d6d6d6" stroke-width="1.08"/><path d="M1004.75 96.00 L1004.75 141.00" stroke="#d6d6d6" stroke-width="1.08"/><path d="M1091.50 96.00 L1091.50 141.00" stroke="#d6d6d6" stroke-width="1.08"/><g transform="translate(139.00 72.40) scale(0.8285)"><path d="M 3.69 53.96 L 21.71 53.96" fill="none" stroke="#666" stroke-width="1.4" /><path d="M26.77 37.19 A8.11 8.44 0 0 1 26.77 54.19" fill="none" stroke="#666" stroke-width="1.4" /><rect x="0.21" y="52.16" width="3.6" height="3.6" fill="#3c96e6"/><rect x="21.60" y="52.16" width="3.6" height="3.6" fill="#3c96e6"/><rect x="21.60" y="36.06" width="3.6" height="3.6" fill="#3c96e6"/></g><g transform="translate(173.20 72.40) scale(0.8285)"><rect x="5.16" y="34.82" width="30.62" height="21.05" fill="none" stroke="#666" stroke-width="1.4" /><rect x="3.36" y="33.02" width="3.6" height="3.6" fill="#3c96e6"/><rect x="33.76" y="54.07" width="3.6" height="3.6" fill="#3c96e6"/></g><g transform="translate(214.50 72.40) scale(0.8285)"><circle cx="16.74" cy="45.18" r="16.44" fill="none" stroke="#666" stroke-width="1.4" /><path d="M 8.63 53.40 L 24.96 37.07" fill="none" stroke="#3a96e0" stroke-width="1.6" /><path d="M 26.98 35.39 L 25.86 40.45 L 21.92 36.51 Z M 6.50 55.42 L 7.62 50.36 L 11.56 54.30 Z" fill="#3a96e0"/><rect x="15.14" y="43.58" width="3.2" height="3.2" fill="#3c96e6"/></g><g transform="translate(253.00 72.40) scale(0.8285)"><path d="M 1.36 59.03 C 1.70 52.27 3.16 44.96 6.20 41.58" fill="none" stroke="#666" stroke-width="1.4" /><path d="M 11.04 40.45 C 16.11 42.70 19.48 49.46 24.21 51.37" fill="none" stroke="#666" stroke-width="1.4" /><path d="M 29.05 50.02 C 32.43 45.52 33.22 38.76 33.11 32.57" fill="none" stroke="#666" stroke-width="1.4" /><rect x="-0.10" y="59.25" width="3.6" height="3.6" fill="#3c96e6"/><rect x="6.43" y="38.09" width="3.6" height="3.6" fill="#3c96e6"/><rect x="24.44" y="49.91" width="3.6" height="3.6" fill="#3c96e6"/><rect x="31.19" y="28.52" width="3.6" height="3.6" fill="#3c96e6"/></g><g transform="translate(292.00 72.40) scale(0.8285)"><path d="M 15.26 30.32 L 15.26 61.05 M 14.81 32.23 L 0.40 61.05 L 15.26 61.05" fill="none" stroke="#666" stroke-width="1.5" /><path d="M 17.29 31.45 L 17.29 61.05 L 31.92 61.05 Z" fill="none" stroke="#3a96e0" stroke-width="1.3" /></g><g transform="translate(329.00 72.40) scale(0.8285)"><path d="M 0.47 30.88 L 0.47 60.38 M 33.68 30.88 L 33.68 60.38" fill="none" stroke="#666" stroke-width="1.5" /><path d="M 3.29 39.89 L 30.87 39.89" fill="none" stroke="#3a96e0" stroke-width="1.5" /><path d="M 1.03 39.89 L 5.31 37.41 L 5.31 42.37 Z M 33.01 39.89 L 28.73 37.41 L 28.73 42.37 Z" fill="#3a96e0"/></g><g transform="translate(377.00 72.40) scale(0.8285)"><path d="M0.51 48.67 A19.70 19.70 0 0 1 20.21 29.08" fill="none" stroke="#3a96e0" stroke-width="1.5" /><path d="M 0.51 50.58 L 0.51 62.40 M 21.90 29.19 L 34.28 29.19" fill="none" stroke="#666" stroke-width="1.5" /></g><g transform="translate(415.50 72.40) scale(0.8285)"><path d="M 0.69 31.67 L 17.24 31.67" fill="none" stroke="#7db8ee" stroke-width="1.5" stroke-dasharray="3.4 1.6"/><path d="M 26.81 31.67 L 34.69 31.67" fill="none" stroke="#999" stroke-width="1.5" /><path d="M 9.36 35.61 L 10.14 40.79 L 19.49 52.27 L 22.30 49.12 Z" fill="#2b2b2b"/><path d="M 20.05 28.86 L 24.33 33.13 L 24.78 52.27 L 21.18 52.27 Z" fill="#2b2b2b"/><ellipse cx="20.61" cy="56.55" rx="3.38" ry="5.18" transform="rotate(12 20.61 56.55)" fill="none" stroke="#2b2b2b" stroke-width="2.6" /><ellipse cx="28.16" cy="54.30" rx="3.15" ry="4.95" transform="rotate(-48 28.16 54.30)" fill="none" stroke="#2b2b2b" stroke-width="2.6" /><circle cx="21.51" cy="49.12" r="1.1" fill="#fff"/></g><g transform="translate(454.00 72.40) scale(0.8285)"><path d="M35.15 33.36 L13.20 33.36 A12.27 12.27 0 0 0 13.20 57.90 L35.15 57.90" fill="none" stroke="#3a96e0" stroke-width="1.6" /><path d="M35.15 38.99 L14.33 38.99 A6.75 6.75 0 0 0 14.33 52.50 L35.15 52.50" fill="none" stroke="#666" stroke-width="1.5" /></g><g transform="translate(492.00 72.40) scale(0.8285)"><path d="M 0.56 62.40 C 0.79 56.78 1.58 51.15 2.70 47.21" fill="none" stroke="#666" stroke-width="1.4" /><path d="M 2.70 47.21 C 5.29 37.64 10.36 37.64 15.42 44.39 C 20.49 51.15 26.12 57.90 31.97 47.21" fill="none" stroke="#3a96e0" stroke-width="1.5" /><path d="M 31.97 46.64 C 33.10 41.01 34.00 34.26 34.22 28.63" fill="none" stroke="#666" stroke-width="1.4" /></g><g transform="translate(540.00 72.40) scale(0.8285)"><g opacity="0.35"><path d="M 2.43 34.26 L 2.43 59.03 M -0.05 33.13 L 5.02 33.13 M -0.05 60.15 L 5.02 60.15" fill="none" stroke="#3a96e0" stroke-width="1.4" /><path d="M 2.43 33.70 L 0.51 37.64 L 4.34 37.64 Z M 2.43 59.59 L 0.51 55.65 L 4.34 55.65 Z" fill="#3a96e0"/><path d="M 8.96 34.82 L 8.96 59.03 L 32.60 59.03" fill="none" stroke="#666" stroke-width="1.8" /><path d="M 14.25 41.01 L 14.25 53.96 L 27.53 53.96" fill="none" stroke="#666" stroke-width="1.5" /><path d="M14.25 41.01 A13.28 12.95 0 0 1 27.53 53.96" fill="none" stroke="#666" stroke-width="1.5" /><rect x="7.46" y="33.32" width="3" height="3" fill="#666"/><rect x="7.26" y="57.33" width="3.4" height="3.4" fill="#666"/><rect x="31.10" y="57.53" width="3" height="3" fill="#666"/><rect x="12.75" y="39.51" width="3" height="3" fill="#666"/><rect x="12.75" y="52.46" width="3" height="3" fill="#666"/><rect x="26.03" y="52.46" width="3" height="3" fill="#666"/><path d="M 29.78 28.86 L 17.96 36.51 L 24.15 37.41 L 21.90 45.29 L 34.06 37.41 L 26.97 36.29 Z" fill="#f0a030"/></g></g><g transform="translate(585.00 72.40) scale(0.8285)"><path d="M 7.99 32.57 L 7.99 48.33 M 10.47 32.01 L 10.47 48.33" fill="none" stroke="#8a8a8a" stroke-width="0.9" /><path d="M 3.15 32.57 L 7.43 35.61 M 3.15 36.74 L 7.43 39.78 M 3.15 40.90 L 7.43 43.94 M 3.15 45.07 L 7.43 48.11" fill="none" stroke="#d32f2f" stroke-width="1.5" /><path d="M 0.11 51.37 L 17.22 51.37" fill="none" stroke="#888" stroke-width="2.2" /><path d="M 0.11 54.30 L 17.22 54.30" fill="none" stroke="#d32f2f" stroke-width="1.3" /><path d="M 0.67 58.46 L 4.61 54.75 M 6.08 58.46 L 10.02 54.75 M 11.48 58.46 L 15.42 54.75" fill="none" stroke="#d32f2f" stroke-width="1.6" /></g><g transform="translate(616.00 72.40) scale(0.8285)"><path d="M 1.92 28.86 L 1.92 59.59" fill="none" stroke="#d32f2f" stroke-width="1.6" /><path d="M 5.08 61.05 L 35.13 61.05" fill="none" stroke="#666" stroke-width="1.5" /><rect x="0.22" y="59.35" width="3.4" height="3.4" fill="#c62828"/></g><g transform="translate(654.50 72.40) scale(0.8285)"><circle cx="13.20" cy="49.12" r="12.50" fill="none" stroke="#d32f2f" stroke-width="1.4" /><path d="M 12.30 29.76 L 33.69 50.58" fill="none" stroke="#666" stroke-width="1.4" /></g><g transform="translate(698.00 72.40) scale(0.8285)"><rect x="0.55" y="38.43" width="21.61" height="4.28" fill="#c62828"/><rect x="0.55" y="48.90" width="21.61" height="4.28" fill="#666"/></g><g transform="translate(734.50 72.40) scale(0.8285)"><path d="M 0.38 52.61 L 19.74 33.47" fill="none" stroke="#d32f2f" stroke-width="1.5" /><path d="M 5.78 58.13 L 25.15 38.99" fill="none" stroke="#666" stroke-width="1.4" /></g><g transform="translate(771.50 72.40) scale(0.8285)"><path d="M 0.79 37.92 L 22.21 59.54" fill="none" stroke="#d32f2f" stroke-width="1.5" /><path d="M 12.28 48.39 L 27.81 32.86" fill="none" stroke="#777" stroke-width="1.4" /></g><g transform="translate(822.75 72.40) scale(0.8285)"><path d="M 0.61 36.51 L 8.83 28.86 L 30.78 28.86 L 30.78 50.58 L 23.47 58.13 L 0.61 58.13 Z" fill="#dadada" stroke="#9a9a9a" stroke-width="0.9"/><path d="M 0.61 36.51 L 8.83 28.86 L 30.78 28.86 L 23.47 36.51 Z" fill="#f2f2f2" stroke="#9a9a9a" stroke-width="0.7"/><path d="M 23.47 36.51 L 30.78 28.86 L 30.78 50.58 L 23.47 58.13 Z" fill="#bdbdbd"/><rect x="18.96" y="49.46" width="18.01" height="14.63" fill="#f1f1f1" opacity="0.6"/><path d="M 20.09 53.17 L 35.29 53.17 M 20.09 59.48 L 35.29 59.48" fill="none" stroke="#666" stroke-width="1.7" /><path d="M 24.37 50.02 L 24.37 56.33" fill="none" stroke="#3a96e0" stroke-width="2.2" stroke-linecap="round"/><path d="M 30.78 56.33 L 30.78 62.63" fill="none" stroke="#666" stroke-width="2.2" /></g><g transform="translate(861.00 72.40) scale(0.8285)"><rect x="1.19" y="29.19" width="31.52" height="29.83" fill="#f4f4f4" stroke="#666" stroke-width="1.2"/><rect x="1.19" y="28.86" width="31.52" height="6.53" fill="#6a6a6a"/><rect x="3.11" y="31.11" width="3.94" height="2.03" fill="#eee"/><path d="M 4.57 38.99 L 29.34 38.99 L 29.34 54.75 L 4.57 54.75 Z M 4.57 44.39 L 29.34 44.39 M 4.57 49.57 L 29.34 49.57 M 10.20 38.99 L 10.20 54.75 M 15.49 38.99 L 15.49 54.75" fill="none" stroke="#666" stroke-width="1.3" /><rect x="18.87" y="49.46" width="18.01" height="14.63" fill="#f1f1f1" opacity="0.7"/><path d="M 19.99 53.17 L 35.19 53.17 M 19.99 59.48 L 35.19 59.48" fill="none" stroke="#666" stroke-width="1.7" /><path d="M 24.27 50.02 L 24.27 56.33" fill="none" stroke="#3a96e0" stroke-width="2.2" stroke-linecap="round"/><path d="M 30.69 56.33 L 30.69 62.63" fill="none" stroke="#666" stroke-width="2.2" /></g><g transform="translate(942.75 72.40) scale(0.8285)"><rect x="0.42" y="47.77" width="30.17" height="6.53" fill="#f0a838"/><path d="M 0.98 37.41 L 0.98 46.64 M 30.03 37.41 L 30.03 46.64 M 3.80 42.14 L 27.44 42.14" fill="none" stroke="#666" stroke-width="1.3" /><path d="M 1.66 42.14 L 5.71 39.89 L 5.71 44.39 Z M 29.35 42.14 L 25.30 39.89 L 25.30 44.39 Z" fill="#666"/><path d="M 2.11 47.99 L 2.11 50.58 M 5.15 47.99 L 5.15 49.46 M 8.19 47.99 L 8.19 50.58 M 11.23 47.99 L 11.23 49.46 M 14.27 47.99 L 14.27 50.58 M 17.31 47.99 L 17.31 49.46 M 20.35 47.99 L 20.35 50.58 M 23.39 47.99 L 23.39 49.46 M 26.43 47.99 L 26.43 50.58 M 29.47 47.99 L 29.47 49.46" fill="none" stroke="#7a5a20" stroke-width="0.9" /></g><g transform="translate(1017.00 72.40) scale(0.8285)"><path d="M -0.02 32.01 Q -0.02 30.32 2.23 30.32 L 23.62 30.32 Q 25.87 30.32 25.87 32.23 L 25.87 38.20 L -0.02 38.20 Z" fill="#6ab4ec"/><path d="M -0.02 32.01 Q -0.02 30.32 2.23 30.32 L 8.42 30.32 L 6.74 38.20 L -0.02 38.20 Z" fill="#8accfa"/><path d="M 20.24 30.32 L 23.62 30.32 Q 25.87 30.32 25.87 32.23 L 25.87 38.20 L 19.68 38.20 Z" fill="#4a94d4"/><rect x="5.61" y="38.20" width="14.07" height="23.87" rx="1" fill="#74b8ee"/><path d="M 5.27 41.01 L 20.02 41.69 M 5.27 43.49 L 20.02 44.17 M 5.27 45.97 L 20.02 46.64 M 5.27 48.44 L 20.02 49.12 M 5.27 50.92 L 20.02 51.60 M 5.27 53.40 L 20.02 54.07 M 5.27 55.87 L 20.02 56.55 M 5.27 58.35 L 20.02 59.03 M 5.27 60.83 L 20.02 61.50" fill="none" stroke="#4f9ad8" stroke-width="0.9" /><path d="M 17.43 55.42 L 32.07 55.42 M 24.75 47.99 L 24.75 62.63" fill="none" stroke="#f1f1f1" stroke-width="5.6" /><path d="M 17.43 55.42 L 32.07 55.42 M 24.75 48.33 L 24.75 62.40" fill="none" stroke="#4caf50" stroke-width="4.0" /></g><g transform="translate(1054.75 72.40) scale(0.8285)"><rect x="0.41" y="29.76" width="30.96" height="30.40" fill="#86caff" stroke="#4a9ee0" stroke-width="0.8"/><path d="M 0.63 51.15 C 4.57 43.83 9.64 40.45 13.02 44.39 C 15.83 47.77 18.08 53.96 20.90 55.65 C 23.71 52.27 25.96 48.90 28.21 50.58 C 29.90 52.27 31.03 54.52 31.25 55.65 L 31.25 59.93 L 0.63 59.93 Z" fill="#4193cf"/><circle cx="22.92" cy="38.54" r="3.15" fill="#ffffc8"/></g><g transform="translate(1125.75 72.40) scale(0.8285)"><rect x="0.17" y="29.82" width="29.18" height="22.63" rx="1.5" fill="none" stroke="#5cc96a" stroke-width="1.7" stroke-dasharray="3.3 2.2"/><path d="M 22.46 44.68 L 22.46 59.54 L 25.70 57.17 L 28.00 62.58 L 30.90 61.36 L 28.54 56.16 L 32.93 55.15 Z" fill="#fafafa" stroke="#555" stroke-width="1.2" stroke-linejoin="round"/></g><g transform="translate(1221.90 72.40) scale(0.8285)"><circle cx="34.15" cy="45.86" r="16.6" fill="#69cd3b"/><path d="M 25.93 45.52 L 32.35 52.27 L 43.15 40.79" fill="none" stroke="#fff" stroke-width="3.9" /></g></svg>
</div>
<div class="win" style="position:absolute;left:0;top:0;width:2888px;height:816px;will-change:transform;clip-path:inset(19.40px 19.50px 17.50px 1330.00px);">
<div style="position:absolute;left:1330.00px;top:172.00px;width:1538.50px;height:626.50px;background:#4c5568;"></div>
<svg style="position:absolute;left:0.00px;top:0.00px;" width="2888.00" height="816.00" viewBox="0 0 2888 816"><path d="M1506.25 798.5V445.95A128.3 126.6 0 0 1 1634.55 319.3H2868.5V798.5Z" fill="#4e6178"/><path d="M1340.93 172.00V798.50M1359.27 172.00V798.50M1377.60 172.00V798.50M1395.93 172.00V798.50M1432.60 172.00V798.50M1450.93 172.00V798.50M1469.26 172.00V798.50M1487.60 172.00V798.50M1524.26 172.00V798.50M1542.60 172.00V798.50M1560.93 172.00V798.50M1579.26 172.00V798.50M1615.93 172.00V798.50M1634.26 172.00V798.50M1652.59 172.00V798.50M1670.93 172.00V798.50M1707.59 172.00V798.50M1725.93 172.00V798.50M1744.26 172.00V798.50M1762.59 172.00V798.50M1799.26 172.00V798.50M1817.59 172.00V798.50M1835.92 172.00V798.50M1854.26 172.00V798.50M1890.92 172.00V798.50M1909.26 172.00V798.50M1927.59 172.00V798.50M1945.92 172.00V798.50M1982.59 172.00V798.50M2000.92 172.00V798.50M2019.25 172.00V798.50M2037.59 172.00V798.50M2074.25 172.00V798.50M2092.59 172.00V798.50M2110.92 172.00V798.50M2129.25 172.00V798.50M2165.92 172.00V798.50M2184.25 172.00V798.50M2202.58 172.00V798.50M2220.92 172.00V798.50M2257.58 172.00V798.50M2275.92 172.00V798.50M2294.25 172.00V798.50M2312.58 172.00V798.50M2349.25 172.00V798.50M2367.58 172.00V798.50M2385.91 172.00V798.50M2404.25 172.00V798.50M2440.91 172.00V798.50M2459.25 172.00V798.50M2477.58 172.00V798.50M2495.91 172.00V798.50M2532.58 172.00V798.50M2550.91 172.00V798.50M2569.24 172.00V798.50M2587.58 172.00V798.50M2624.24 172.00V798.50M2642.58 172.00V798.50M2660.91 172.00V798.50M2679.24 172.00V798.50M2715.91 172.00V798.50M2734.24 172.00V798.50M2752.57 172.00V798.50M2770.91 172.00V798.50M2807.57 172.00V798.50M2825.91 172.00V798.50M2844.24 172.00V798.50M2862.57 172.00V798.50M1330.00 174.71H2868.50M1330.00 192.79H2868.50M1330.00 210.87H2868.50M1330.00 247.03H2868.50M1330.00 265.11H2868.50M1330.00 283.19H2868.50M1330.00 301.27H2868.50M1330.00 337.43H2868.50M1330.00 355.51H2868.50M1330.00 373.59H2868.50M1330.00 391.67H2868.50M1330.00 427.83H2868.50M1330.00 445.91H2868.50M1330.00 463.99H2868.50M1330.00 482.07H2868.50M1330.00 518.23H2868.50M1330.00 536.31H2868.50M1330.00 554.39H2868.50M1330.00 572.47H2868.50M1330.00 608.63H2868.50M1330.00 626.71H2868.50M1330.00 644.79H2868.50M1330.00 662.87H2868.50M1330.00 699.03H2868.50M1330.00 717.11H2868.50M1330.00 735.19H2868.50M1330.00 753.27H2868.50M1330.00 789.43H2868.50" stroke="#fff" stroke-opacity="0.072" stroke-width="1" fill="none"/><path d="M1414.27 172.00V798.50M1505.93 172.00V798.50M1597.60 172.00V798.50M1689.26 172.00V798.50M1780.93 172.00V798.50M1872.59 172.00V798.50M1964.26 172.00V798.50M2055.92 172.00V798.50M2147.59 172.00V798.50M2239.25 172.00V798.50M2330.91 172.00V798.50M2422.58 172.00V798.50M2514.24 172.00V798.50M2605.91 172.00V798.50M2697.57 172.00V798.50M2789.24 172.00V798.50M1330.00 228.95H2868.50M1330.00 319.35H2868.50M1330.00 409.75H2868.50M1330.00 500.15H2868.50M1330.00 590.55H2868.50M1330.00 680.95H2868.50M1330.00 771.35H2868.50" stroke="#fff" stroke-opacity="0.135" stroke-width="1" fill="none"/><path d="M2239.25 172V798.5" stroke="#3d8a5a" stroke-width="1"/><path d="M1500 312L1522 334" stroke="#6a9a3a" stroke-width="1"/><path d="M1521.5 338.3L1860 798.5M2842 492.5L2618 798.5" stroke="#b9bec6" stroke-width="1" stroke-dasharray="6 3" fill="none"/><path d="M1561.25 499.5H2868.5" stroke="#a9aeb8" stroke-opacity="0.55" stroke-width="1" stroke-dasharray="10 2 2 2" fill="none"/><path d="M1832.5 428V499.5M2103.5 428V499.5M2374.5 374V499.5M2645.75 374V499.5M1560.5 373.4H1633M1560.5 373.4V446" stroke="#b9bec6" stroke-width="1.1" stroke-dasharray="7 3" fill="none"/><path d="M1506.25 798.5V445.95A128.3 126.6 0 0 1 1634.55 319.3H2868.5" fill="none" stroke="#c9ced7" stroke-width="1.6"/><path d="M1561.25 798.5V445.95A73.3 72.4 0 0 1 1634.55 373.4H2868.5" fill="none" stroke="#c9ced7" stroke-width="1.6"/><path d="M1832.5 373.4V427.5H2103.5" fill="none" stroke="#f2f4f6" stroke-width="1.75"/><path d="M2103.5 373.4V428.4" fill="none" stroke="#58aef2" stroke-width="1.6"/><path d="M2374.5 427.5H2657.75" fill="none" stroke="#c4c9d0" stroke-opacity="0.8" stroke-width="0.8"/><path d="M1746.25 374V427M1740 427.5H1826.25" stroke="#77bd27" stroke-width="1.1" fill="none"/><path d="M1746.25 374.00L1749.05 386.00L1743.45 386.00Z" fill="#77bd27"/><path d="M1746.25 427.00L1743.45 415.00L1749.05 415.00Z" fill="#77bd27"/><text transform="translate(1741 426.6) rotate(-90)" font-family="Liberation Sans, sans-serif" font-size="15.6" fill="#86cc2c" textLength="52" lengthAdjust="spacing">fx: 3.00</text><path d="M2359.5 319.3V372.5" stroke="#77bd27" stroke-width="1.1" fill="none"/><path d="M2359.50 372.80L2356.70 360.80L2362.30 360.80Z" fill="#77bd27"/><text transform="translate(2364.4 331.2) rotate(90)" font-family="Liberation Sans, sans-serif" font-size="15.6" fill="#86cc2c" textLength="30.2" lengthAdjust="spacing">3.00</text><path d="M2374.5 282.5V373M2645.75 282.5V373M2374.5 288.5H2645.75" stroke="#77bd27" stroke-width="1" fill="none"/><path d="M2374.90 288.50L2387.90 285.50L2387.90 291.50Z" fill="#77bd27"/><path d="M2645.40 288.50L2632.40 291.50L2632.40 285.50Z" fill="#77bd27"/><path d="M2288.5 375V388.25M2288.5 411.75V417.5" stroke="#77bd27" stroke-width="1.1" fill="none"/><path d="M2288.50 374.30L2291.30 385.80L2285.70 385.80Z" fill="#77bd27"/><path d="M2288.50 418.00L2285.90 413.00L2291.10 413.00Z" fill="#77bd27"/><circle cx="1634.5" cy="445.5" r="3.5" fill="#fff" stroke="#c8ccd2" stroke-width="0.6"/><circle cx="2103.5" cy="373.4" r="3.5" fill="#fff" stroke="#c8ccd2" stroke-width="0.6"/><circle cx="2374.5" cy="373.4" r="3.5" fill="#fff" stroke="#c8ccd2" stroke-width="0.6"/><circle cx="2646" cy="373.4" r="3.5" fill="#fff" stroke="#c8ccd2" stroke-width="0.6"/><path d="M2634.5 427.5H2657.5M2645.75 416V439" stroke="#b8ae28" stroke-width="1.1"/><rect x="1685.00" y="378.00" width="22" height="9" rx="1.6" fill="#2f353f" fill-opacity="0.85"/><path d="M1686.60 380.30H1705.40" stroke="#aeb3ba" stroke-width="1.7"/><path d="M1686.60 382.50H1705.40" stroke="#e8eaee" stroke-width="0.7"/><path d="M1688.20 385.60L1690.40 383.20M1692.00 385.60L1694.20 383.20M1695.80 385.60L1698.00 383.20M1699.60 385.60L1701.80 383.20M1703.40 385.60L1705.60 383.20" stroke="#aeb3ba" stroke-width="1"/><rect x="1956.50" y="378.00" width="22" height="9" rx="1.6" fill="#2f353f" fill-opacity="0.85"/><path d="M1958.10 380.30H1976.90" stroke="#aeb3ba" stroke-width="1.7"/><path d="M1958.10 382.50H1976.90" stroke="#e8eaee" stroke-width="0.7"/><path d="M1959.70 385.60L1961.90 383.20M1963.50 385.60L1965.70 383.20M1967.30 385.60L1969.50 383.20M1971.10 385.60L1973.30 383.20M1974.90 385.60L1977.10 383.20" stroke="#aeb3ba" stroke-width="1"/><rect x="1956.50" y="432.70" width="22" height="9" rx="1.6" fill="#2f353f" fill-opacity="0.85"/><path d="M1958.10 435.00H1976.90" stroke="#aeb3ba" stroke-width="1.7"/><path d="M1958.10 437.20H1976.90" stroke="#e8eaee" stroke-width="0.7"/><path d="M1959.70 440.30L1961.90 437.90M1963.50 440.30L1965.70 437.90M1967.30 440.30L1969.50 437.90M1971.10 440.30L1973.30 437.90M1974.90 440.30L1977.10 437.90" stroke="#aeb3ba" stroke-width="1"/><rect x="2698.50" y="324.10" width="22" height="9" rx="1.6" fill="#2f353f" fill-opacity="0.85"/><path d="M2700.10 326.40H2718.90" stroke="#aeb3ba" stroke-width="1.7"/><path d="M2700.10 328.60H2718.90" stroke="#e8eaee" stroke-width="0.7"/><path d="M2701.70 331.70L2703.90 329.30M2705.50 331.70L2707.70 329.30M2709.30 331.70L2711.50 329.30M2713.10 331.70L2715.30 329.30M2716.90 331.70L2719.10 329.30" stroke="#aeb3ba" stroke-width="1"/><rect x="2736.00" y="377.90" width="22" height="9" rx="1.6" fill="#2f353f" fill-opacity="0.85"/><path d="M2737.60 380.20H2756.40" stroke="#aeb3ba" stroke-width="1.7"/><path d="M2737.60 382.40H2756.40" stroke="#e8eaee" stroke-width="0.7"/><path d="M2739.20 385.50L2741.40 383.10M2743.00 385.50L2745.20 383.10M2746.80 385.50L2749.00 383.10M2750.60 385.50L2752.80 383.10M2754.40 385.50L2756.60 383.10" stroke="#aeb3ba" stroke-width="1"/><rect x="1640.30" y="504.25" width="22" height="9" rx="1.6" fill="#2f353f" fill-opacity="0.85"/><path d="M1641.90 506.55H1660.70" stroke="#aeb3ba" stroke-width="1.7"/><path d="M1641.90 508.75H1660.70" stroke="#e8eaee" stroke-width="0.7"/><path d="M1643.50 511.85L1645.70 509.45M1647.30 511.85L1649.50 509.45M1651.10 511.85L1653.30 509.45M1654.90 511.85L1657.10 509.45M1658.70 511.85L1660.90 509.45" stroke="#aeb3ba" stroke-width="1"/><rect x="1888.90" y="504.25" width="22" height="9" rx="1.6" fill="#2f353f" fill-opacity="0.85"/><path d="M1890.50 506.55H1909.30" stroke="#aeb3ba" stroke-width="1.7"/><path d="M1890.50 508.75H1909.30" stroke="#e8eaee" stroke-width="0.7"/><path d="M1892.10 511.85L1894.30 509.45M1895.90 511.85L1898.10 509.45M1899.70 511.85L1901.90 509.45M1903.50 511.85L1905.70 509.45M1907.30 511.85L1909.50 509.45" stroke="#aeb3ba" stroke-width="1"/><rect x="2160.30" y="504.25" width="22" height="9" rx="1.6" fill="#2f353f" fill-opacity="0.85"/><path d="M2161.90 506.55H2180.70" stroke="#aeb3ba" stroke-width="1.7"/><path d="M2161.90 508.75H2180.70" stroke="#e8eaee" stroke-width="0.7"/><path d="M2163.50 511.85L2165.70 509.45M2167.30 511.85L2169.50 509.45M2171.10 511.85L2173.30 509.45M2174.90 511.85L2177.10 509.45M2178.70 511.85L2180.90 509.45" stroke="#aeb3ba" stroke-width="1"/><rect x="2431.40" y="504.25" width="22" height="9" rx="1.6" fill="#2f353f" fill-opacity="0.85"/><path d="M2433.00 506.55H2451.80" stroke="#aeb3ba" stroke-width="1.7"/><path d="M2433.00 508.75H2451.80" stroke="#e8eaee" stroke-width="0.7"/><path d="M2434.60 511.85L2436.80 509.45M2438.40 511.85L2440.60 509.45M2442.20 511.85L2444.40 509.45M2446.00 511.85L2448.20 509.45M2449.80 511.85L2452.00 509.45" stroke="#aeb3ba" stroke-width="1"/><rect x="2725.30" y="504.25" width="22" height="9" rx="1.6" fill="#2f353f" fill-opacity="0.85"/><path d="M2726.90 506.55H2745.70" stroke="#aeb3ba" stroke-width="1.7"/><path d="M2726.90 508.75H2745.70" stroke="#e8eaee" stroke-width="0.7"/><path d="M2728.50 511.85L2730.70 509.45M2732.30 511.85L2734.50 509.45M2736.10 511.85L2738.30 509.45M2739.90 511.85L2742.10 509.45M2743.70 511.85L2745.90 509.45" stroke="#aeb3ba" stroke-width="1"/><g transform="rotate(90 1572.50 436.20)"><rect x="1561.50" y="431.70" width="22" height="9" rx="1.6" fill="#2f353f" fill-opacity="0.85"/><path d="M1563.10 434.00H1581.90" stroke="#aeb3ba" stroke-width="1.7"/><path d="M1563.10 436.20H1581.90" stroke="#e8eaee" stroke-width="0.7"/><path d="M1564.70 439.30L1566.90 436.90M1568.50 439.30L1570.70 436.90M1572.30 439.30L1574.50 436.90M1576.10 439.30L1578.30 436.90M1579.90 439.30L1582.10 436.90" stroke="#aeb3ba" stroke-width="1"/></g><g transform="rotate(90 1843.75 400.00)"><rect x="1832.75" y="395.50" width="22" height="9" rx="1.6" fill="#2f353f" fill-opacity="0.85"/><path d="M1834.35 397.80H1853.15" stroke="#aeb3ba" stroke-width="1.7"/><path d="M1834.35 400.00H1853.15" stroke="#e8eaee" stroke-width="0.7"/><path d="M1835.95 403.10L1838.15 400.70M1839.75 403.10L1841.95 400.70M1843.55 403.10L1845.75 400.70M1847.35 403.10L1849.55 400.70M1851.15 403.10L1853.35 400.70" stroke="#aeb3ba" stroke-width="1"/></g><g transform="rotate(90 1843.75 436.20)"><rect x="1832.75" y="431.70" width="22" height="9" rx="1.6" fill="#2f353f" fill-opacity="0.85"/><path d="M1834.35 434.00H1853.15" stroke="#aeb3ba" stroke-width="1.7"/><path d="M1834.35 436.20H1853.15" stroke="#e8eaee" stroke-width="0.7"/><path d="M1835.95 439.30L1838.15 436.90M1839.75 439.30L1841.95 436.90M1843.55 439.30L1845.75 436.90M1847.35 439.30L1849.55 436.90M1851.15 439.30L1853.35 436.90" stroke="#aeb3ba" stroke-width="1"/></g><g transform="rotate(90 2115.10 400.00)"><rect x="2104.10" y="395.50" width="22" height="9" rx="1.6" fill="#2f353f" fill-opacity="0.85"/><path d="M2105.70 397.80H2124.50" stroke="#aeb3ba" stroke-width="1.7"/><path d="M2105.70 400.00H2124.50" stroke="#e8eaee" stroke-width="0.7"/><path d="M2107.30 403.10L2109.50 400.70M2111.10 403.10L2113.30 400.70M2114.90 403.10L2117.10 400.70M2118.70 403.10L2120.90 400.70M2122.50 403.10L2124.70 400.70" stroke="#aeb3ba" stroke-width="1"/></g><g transform="rotate(90 2115.10 436.20)"><rect x="2104.10" y="431.70" width="22" height="9" rx="1.6" fill="#2f353f" fill-opacity="0.85"/><path d="M2105.70 434.00H2124.50" stroke="#aeb3ba" stroke-width="1.7"/><path d="M2105.70 436.20H2124.50" stroke="#e8eaee" stroke-width="0.7"/><path d="M2107.30 439.30L2109.50 436.90M2111.10 439.30L2113.30 436.90M2114.90 439.30L2117.10 436.90M2118.70 439.30L2120.90 436.90M2122.50 439.30L2124.70 436.90" stroke="#aeb3ba" stroke-width="1"/></g><g transform="rotate(90 2657.20 457.50)"><rect x="2646.20" y="453.00" width="22" height="9" rx="1.6" fill="#2f353f" fill-opacity="0.85"/><path d="M2647.80 455.30H2666.60" stroke="#aeb3ba" stroke-width="1.7"/><path d="M2647.80 457.50H2666.60" stroke="#e8eaee" stroke-width="0.7"/><path d="M2649.40 460.60L2651.60 458.20M2653.20 460.60L2655.40 458.20M2657.00 460.60L2659.20 458.20M2660.80 460.60L2663.00 458.20M2664.60 460.60L2666.80 458.20" stroke="#aeb3ba" stroke-width="1"/></g><rect x="1731.20" y="495.30" width="21" height="8.4" rx="1.6" fill="#2f353f" fill-opacity="0.85"/><path d="M1732.80 498.00H1750.60M1732.80 501.00H1750.60" stroke="#aeb3ba" stroke-width="1.5"/><rect x="1956.90" y="495.30" width="21" height="8.4" rx="1.6" fill="#2f353f" fill-opacity="0.85"/><path d="M1958.50 498.00H1976.30M1958.50 501.00H1976.30" stroke="#aeb3ba" stroke-width="1.5"/><rect x="2024.90" y="495.30" width="21" height="8.4" rx="1.6" fill="#2f353f" fill-opacity="0.85"/><path d="M2026.50 498.00H2044.30M2026.50 501.00H2044.30" stroke="#aeb3ba" stroke-width="1.5"/><rect x="2228.80" y="495.30" width="21" height="8.4" rx="1.6" fill="#2f353f" fill-opacity="0.85"/><path d="M2230.40 498.00H2248.20M2230.40 501.00H2248.20" stroke="#aeb3ba" stroke-width="1.5"/><rect x="2296.30" y="495.30" width="21" height="8.4" rx="1.6" fill="#2f353f" fill-opacity="0.85"/><path d="M2297.90 498.00H2315.70M2297.90 501.00H2315.70" stroke="#aeb3ba" stroke-width="1.5"/><rect x="2499.60" y="495.30" width="21" height="8.4" rx="1.6" fill="#2f353f" fill-opacity="0.85"/><path d="M2501.20 498.00H2519.00M2501.20 501.00H2519.00" stroke="#aeb3ba" stroke-width="1.5"/><rect x="2567.50" y="495.30" width="21" height="8.4" rx="1.6" fill="#2f353f" fill-opacity="0.85"/><path d="M2569.10 498.00H2586.90M2569.10 501.00H2586.90" stroke="#aeb3ba" stroke-width="1.5"/><rect x="2815.80" y="495.30" width="21" height="8.4" rx="1.6" fill="#2f353f" fill-opacity="0.85"/><path d="M2817.40 498.00H2835.20M2817.40 501.00H2835.20" stroke="#aeb3ba" stroke-width="1.5"/><path d="M2431.5 337.5L2444.5 323.5M2436.5 340.5L2449.5 326.5" stroke="#2f353f" stroke-opacity="0.85" stroke-width="3.6" stroke-linecap="round"/><path d="M2431.5 337.5L2444.5 323.5M2436.5 340.5L2449.5 326.5" stroke="#8b919a" stroke-width="1.6" stroke-linecap="round"/><path d="M2556.6 332.1L2563 338.5M2559.8 335.3L2572 322.5" stroke="#2f353f" stroke-opacity="0.85" stroke-width="3.6" stroke-linecap="round"/><path d="M2556.6 332.1L2563 338.5M2559.8 335.3L2572 322.5" stroke="#8b919a" stroke-width="1.6" stroke-linecap="round"/><path d="M1510.1 651.6L1516.5 658M1513.3 654.8L1525.5 642" stroke="#2f353f" stroke-opacity="0.85" stroke-width="3.6" stroke-linecap="round"/><path d="M1510.1 651.6L1516.5 658M1513.3 654.8L1525.5 642" stroke="#8b919a" stroke-width="1.6" stroke-linecap="round"/><circle cx="1615.4" cy="307.4" r="6.4" fill="none" stroke="#2f353f" stroke-opacity="0.85" stroke-width="3.8"/><path d="M1611 296L1627 307" stroke="#2f353f" stroke-opacity="0.85" stroke-width="3.8" stroke-linecap="round"/><circle cx="1615.4" cy="307.4" r="6.4" fill="none" stroke="#9ba0a8" stroke-width="1.7"/><path d="M1611 296L1627 307" stroke="#9ba0a8" stroke-width="1.7" stroke-linecap="round"/><circle cx="2825.4" cy="308.4" r="6.4" fill="none" stroke="#2f353f" stroke-opacity="0.85" stroke-width="3.8"/><path d="M2821 297L2837 308" stroke="#2f353f" stroke-opacity="0.85" stroke-width="3.8" stroke-linecap="round"/><circle cx="2825.4" cy="308.4" r="6.4" fill="none" stroke="#9ba0a8" stroke-width="1.7"/><path d="M2821 297L2837 308" stroke="#9ba0a8" stroke-width="1.7" stroke-linecap="round"/><circle cx="1486.4" cy="438.4" r="6.4" fill="none" stroke="#2f353f" stroke-opacity="0.85" stroke-width="3.8"/><path d="M1482 427L1498 438" stroke="#2f353f" stroke-opacity="0.85" stroke-width="3.8" stroke-linecap="round"/><circle cx="1486.4" cy="438.4" r="6.4" fill="none" stroke="#9ba0a8" stroke-width="1.7"/><path d="M1482 427L1498 438" stroke="#9ba0a8" stroke-width="1.7" stroke-linecap="round"/><path d="M2222.4 335H2238.6M2230 335V325.6" stroke="#2f353f" stroke-opacity="0.9" stroke-width="7" stroke-linecap="round" fill="none"/><path d="M2222.4 335H2238.6M2230 335V325.6" stroke="#a2a7ae" stroke-width="4.4" stroke-linecap="round" fill="none"/><path d="M2222.4 335H2238.6M2230 335V325.6" stroke="#3a414c" stroke-width="2" stroke-linecap="round" fill="none"/><path d="M2222.4 389H2238.6M2230 389V379.6" stroke="#2f353f" stroke-opacity="0.9" stroke-width="7" stroke-linecap="round" fill="none"/><path d="M2222.4 389H2238.6M2230 389V379.6" stroke="#a2a7ae" stroke-width="4.4" stroke-linecap="round" fill="none"/><path d="M2222.4 389H2238.6M2230 389V379.6" stroke="#3a414c" stroke-width="2" stroke-linecap="round" fill="none"/></svg>
<div style="position:absolute;left:2462.00px;top:277.00px;width:87.50px;height:23.75px;background:#fff;"></div>
<span style='position:absolute;left:2472.25px;top:281.62px;font:12.35px/14.81px "DejaVu Sans","Liberation Sans",sans-serif;letter-spacing:-0.772px;color:#333;white-space:nowrap;'>14.800 mm</span>
<div style="position:absolute;left:2240.50px;top:388.25px;width:87.25px;height:23.50px;background:#fff;"></div>
<span style='position:absolute;left:2262.25px;top:391.58px;font:13.60px/16.32px "Liberation Sans",sans-serif;letter-spacing:-0.461px;color:#333;white-space:nowrap;'>mdf</span>
<span style='position:absolute;left:2311.50px;top:391.96px;font:13.20px/15.84px "Liberation Sans",sans-serif;letter-spacing:0.233px;color:#b0b0b0;white-space:nowrap;'>fx</span>
<div style="position:absolute;left:2240.50px;top:417.50px;width:279.25px;height:27.00px;background:#fff;box-shadow:0 2px 6px rgba(0,0,0,0.35);"></div>
<div style="position:absolute;left:2240.50px;top:417.50px;width:279.25px;height:20.75px;background:#c8c8c8;"></div>
<span style='position:absolute;left:2269.00px;top:420.14px;font:13.80px/16.56px "Liberation Sans",sans-serif;letter-spacing:0.000px;color:#000;white-space:nowrap;-webkit-text-stroke:0.5px #000;letter-spacing:0.2px;'>mdf</span>
<span style='position:absolute;left:2296.61px;top:420.14px;font:13.80px/16.56px "Liberation Sans",sans-serif;letter-spacing:-0.090px;color:#111;white-space:nowrap;'>3.00 mm</span>
<div style="position:absolute;left:1334.50px;top:176.25px;width:322.50px;height:26.25px;background:#f1f1f1;box-shadow:0 0.5px 2px rgba(0,0,0,0.35);"></div>
<span style='position:absolute;left:1361.25px;top:181.84px;font:11.80px/14.16px "DejaVu Sans","Liberation Sans",sans-serif;letter-spacing:-0.336px;color:#4a4a4a;white-space:nowrap;'>NAVEGADOR</span>
<div style="position:absolute;left:1373.40px;top:208.00px;width:154.60px;height:20.75px;background:#f1f1f1;box-shadow:0 0.5px 2px rgba(0,0,0,0.35);"></div>
<div style="position:absolute;left:1373.40px;top:208.00px;width:5.00px;height:20.75px;background:#7a3fa8;"></div>
<span style='position:absolute;left:1441.25px;top:211.56px;font:12.07px/14.49px "DejaVu Sans","Liberation Sans",sans-serif;letter-spacing:-0.625px;color:#2c2c2c;white-space:nowrap;-webkit-text-stroke:0.25px #2c2c2c;'>MT03_LÁSER</span>
<div style="position:absolute;left:1392.50px;top:233.25px;width:217.50px;height:21.25px;background:#f1f1f1;box-shadow:0 0.5px 2px rgba(0,0,0,0.35);"></div>
<span style='position:absolute;left:1428.00px;top:237.06px;font:12.07px/14.49px "DejaVu Sans","Liberation Sans",sans-serif;letter-spacing:-0.334px;color:#2c2c2c;white-space:nowrap;-webkit-text-stroke:0.25px #2c2c2c;'>Configuración del documento</span>
<div style="position:absolute;left:1412.00px;top:258.75px;width:143.75px;height:21.00px;background:#f1f1f1;box-shadow:0 0.5px 2px rgba(0,0,0,0.35);"></div>
<span style='position:absolute;left:1447.50px;top:262.43px;font:12.07px/14.49px "DejaVu Sans","Liberation Sans",sans-serif;letter-spacing:-0.449px;color:#2c2c2c;white-space:nowrap;-webkit-text-stroke:0.25px #2c2c2c;'>Unidades: mm, g</span>
<div style="position:absolute;left:1392.50px;top:284.25px;width:144.25px;height:20.75px;background:#f1f1f1;box-shadow:0 0.5px 2px rgba(0,0,0,0.35);"></div>
<span style='position:absolute;left:1428.00px;top:287.81px;font:12.07px/14.49px "DejaVu Sans","Liberation Sans",sans-serif;letter-spacing:-0.451px;color:#2c2c2c;white-space:nowrap;-webkit-text-stroke:0.25px #2c2c2c;'>Vistas guardadas</span>
<div style="position:absolute;left:1392.50px;top:309.50px;width:110.50px;height:21.00px;background:#f1f1f1;box-shadow:0 0.5px 2px rgba(0,0,0,0.35);"></div>
<span style='position:absolute;left:1455.00px;top:313.18px;font:12.07px/14.49px "DejaVu Sans","Liberation Sans",sans-serif;letter-spacing:-0.512px;color:#2c2c2c;white-space:nowrap;-webkit-text-stroke:0.25px #2c2c2c;'>Origen</span>
<div style="position:absolute;left:1392.50px;top:335.00px;width:160.00px;height:20.50px;background:#f1f1f1;box-shadow:0 0.5px 2px rgba(0,0,0,0.35);"></div>
<div style="position:absolute;left:1395.10px;top:336.60px;width:3.00px;height:17.30px;background:#3b4fc4;"></div>
<div style="position:absolute;left:1425.00px;top:336.70px;width:100.50px;height:16.90px;background:#8d8d8d;"></div>
<span style='position:absolute;left:1460.75px;top:339.59px;font:11.59px/13.91px "DejaVu Sans","Liberation Sans",sans-serif;letter-spacing:-0.342px;color:#fff;white-space:nowrap;-webkit-text-stroke:0.5px #fff;'>BASE 1:1</span>
<div style="position:absolute;left:1412.00px;top:360.50px;width:110.50px;height:20.25px;background:#f1f1f1;box-shadow:0 0.5px 2px rgba(0,0,0,0.35);"></div>
<span style='position:absolute;left:1474.50px;top:363.81px;font:12.07px/14.49px "DejaVu Sans","Liberation Sans",sans-serif;letter-spacing:-0.512px;color:#2c2c2c;white-space:nowrap;-webkit-text-stroke:0.25px #2c2c2c;'>Origen</span>
<div style="position:absolute;left:1412.00px;top:385.75px;width:119.25px;height:21.00px;background:#f1f1f1;box-shadow:0 0.5px 2px rgba(0,0,0,0.35);"></div>
<span style='position:absolute;left:1474.50px;top:389.43px;font:12.07px/14.49px "DejaVu Sans","Liberation Sans",sans-serif;letter-spacing:-0.856px;color:#2c2c2c;white-space:nowrap;-webkit-text-stroke:0.25px #2c2c2c;'>Bocetos</span>
<div style="position:absolute;left:1431.25px;top:411.75px;width:119.25px;height:20.25px;background:#f1f1f1;box-shadow:0 0.5px 2px rgba(0,0,0,0.35);"></div>
<span style='position:absolute;left:1493.75px;top:415.06px;font:12.07px/14.49px "DejaVu Sans","Liberation Sans",sans-serif;letter-spacing:-0.880px;color:#2c2c2c;white-space:nowrap;-webkit-text-stroke:0.25px #2c2c2c;'>Boceto1</span>
<div style="position:absolute;left:2842.25px;top:303.25px;width:23.75px;height:226.25px;background:#f1f1f1;box-shadow:0 0.5px 2px rgba(0,0,0,0.35);"></div>
<svg style="position:absolute;left:0.00px;top:0.00px;" width="2888.00" height="816.00" viewBox="0 0 2888 816"><rect x="2333.6" y="398.2" width="12" height="7.8" rx="1" fill="#e9b320"/><path d="M2336 398.4V396.4A3.6 3.4 0 0 1 2343.2 396.4V398.4" fill="none" stroke="#e9b320" stroke-width="1.9"/><rect x="2338.8" y="400.2" width="1.7" height="3.6" fill="#33302a"/><path d="M1340.60 189.60 L1345.60 186.30 L1345.60 192.90Z" fill="#1e1e1e"/><path d="M1345.60 189.60 L1350.60 186.30 L1350.60 192.90Z" fill="#1e1e1e"/><circle cx="1639.25" cy="189.30" r="4.70" fill="#1e1e1e"/><path d="M1636.66 189.30H1641.84" stroke="#f0f0f0" stroke-width="1.97"/><path d="M1354.20 222.00 L1361.80 222.00 L1361.80 215.00Z" fill="#1e1e1e" stroke="#b4b8c0" stroke-width="0.70"/><path d="M1373.60 247.20 L1381.20 247.20 L1381.20 240.20Z" fill="#1e1e1e" stroke="#b4b8c0" stroke-width="0.70"/><path d="M1373.60 349.00 L1381.20 349.00 L1381.20 342.00Z" fill="#1e1e1e" stroke="#b4b8c0" stroke-width="0.70"/><path d="M1393.00 399.80 L1400.60 399.80 L1400.60 392.80Z" fill="#1e1e1e" stroke="#b4b8c0" stroke-width="0.70"/><path d="M1382.50 218.38 Q1390.50 209.18 1398.50 218.38 Q1390.50 227.57 1382.50 218.38Z" fill="#858585"/><circle cx="1390.50" cy="218.38" r="3.30" fill="none" stroke="#e4e4e4" stroke-width="1.30"/><circle cx="1390.50" cy="218.38" r="1.50" fill="#777"/><path d="M1410.00 212.88 Q1410.00 210.88 1412.00 210.88 L1417.00 210.88 L1417.00 225.88 L1410.00 225.88Z" fill="#e4e8ee" stroke="#7a7f88" stroke-width="1.00"/><path d="M1417.00 217.88 L1424.40 217.88 L1424.40 223.88 Q1424.40 225.88 1422.40 225.88 L1417.00 225.88Z" fill="#d4dae2" stroke="#7a7f88" stroke-width="1.00"/><path d="M1408.25 243.88 L1411.85 243.88" stroke="#6f6f6f" stroke-width="3.30"/><path d="M1406.93 247.06 L1409.48 249.60" stroke="#6f6f6f" stroke-width="3.30"/><path d="M1403.75 248.38 L1403.75 251.97" stroke="#6f6f6f" stroke-width="3.30"/><path d="M1400.57 247.06 L1398.02 249.60" stroke="#6f6f6f" stroke-width="3.30"/><path d="M1399.25 243.88 L1395.65 243.88" stroke="#6f6f6f" stroke-width="3.30"/><path d="M1400.57 240.69 L1398.02 238.15" stroke="#6f6f6f" stroke-width="3.30"/><path d="M1403.75 239.38 L1403.75 235.78" stroke="#6f6f6f" stroke-width="3.30"/><path d="M1406.93 240.69 L1409.48 238.15" stroke="#6f6f6f" stroke-width="3.30"/><circle cx="1403.75" cy="243.88" r="4.60" fill="none" stroke="#6f6f6f" stroke-width="3.00"/><path d="M1417.75 261.25 L1425.75 261.25 L1429.75 265.25 L1429.75 273.85 L1417.75 273.85Z" fill="#f4f6f8" stroke="#777" stroke-width="0.90"/><path d="M1425.75 261.25 L1425.75 265.25 L1429.75 265.25" fill="#d8dce0" stroke="#777" stroke-width="0.80"/><rect x="1416.25" y="273.65" width="15.00" height="3.80" fill="#f0a82c"/><path d="M1395.75 287.82 L1402.75 287.82 L1404.35 290.02 L1413.25 290.02 L1413.25 301.43 L1395.75 301.43Z" fill="#8f8f8f"/><path d="M1396.35 291.02 L1413.25 291.02" stroke="#b4b4b4" stroke-width="0.80"/><path d="M1374.60 290.02 L1380.00 294.62 L1374.60 299.23Z" fill="#a4a9b4" stroke="#2f3440" stroke-width="0.90"/><path d="M1396.60 320.00 Q1404.20 311.60 1411.80 320.00 Q1404.20 328.40 1396.60 320.00Z" fill="none" stroke="#9a9a9a" stroke-width="1.10"/><circle cx="1404.20" cy="320.00" r="2.90" fill="none" stroke="#9a9a9a" stroke-width="1.00"/><path d="M1398.60 314.80 L1409.80 325.20 M1401.00 313.80 L1411.80 323.60" stroke="#9a9a9a" stroke-width="1.00"/><path d="M1422.50 313.20 L1429.50 313.20 L1431.10 315.40 L1440.00 315.40 L1440.00 326.80 L1422.50 326.80Z" fill="#8f8f8f"/><path d="M1423.10 316.40 L1440.00 316.40" stroke="#b4b4b4" stroke-width="0.80"/><path d="M1374.60 315.40 L1380.00 320.00 L1374.60 324.60Z" fill="#a4a9b4" stroke="#2f3440" stroke-width="0.90"/><path d="M1401.50 345.25 Q1409.50 336.05 1417.50 345.25 Q1409.50 354.45 1401.50 345.25Z" fill="#858585"/><circle cx="1409.50" cy="345.25" r="3.30" fill="none" stroke="#e4e4e4" stroke-width="1.30"/><circle cx="1409.50" cy="345.25" r="1.50" fill="#777"/><path d="M1429.50 342.25 L1432.50 339.25 L1443.50 339.25 L1443.50 349.25 L1440.50 352.75 L1429.50 352.75Z" fill="#e4e8ee" stroke="#555" stroke-width="0.90"/><path d="M1429.50 342.25 L1440.50 342.25 L1443.50 339.25 M1440.50 342.25 L1440.50 352.75" fill="none" stroke="#555" stroke-width="0.80"/><path d="M1429.90 336.75 V345.25 M1427.50 339.25 H1432.30 M1426.50 342.85 Q1429.90 347.25 1433.30 342.85" fill="none" stroke="#222" stroke-width="1.10"/><circle cx="1537.50" cy="345.25" r="6.20" fill="#f4f4f4" stroke="#8a8a8a" stroke-width="1.00"/><circle cx="1537.50" cy="345.25" r="2.90" fill="#333"/><path d="M1415.90 370.62 Q1423.50 362.23 1431.10 370.62 Q1423.50 379.02 1415.90 370.62Z" fill="none" stroke="#9a9a9a" stroke-width="1.10"/><circle cx="1423.50" cy="370.62" r="2.90" fill="none" stroke="#9a9a9a" stroke-width="1.00"/><path d="M1417.90 365.43 L1429.10 375.82 M1420.30 364.43 L1431.10 374.23" stroke="#9a9a9a" stroke-width="1.00"/><path d="M1442.00 363.82 L1449.00 363.82 L1450.60 366.02 L1459.50 366.02 L1459.50 377.43 L1442.00 377.43Z" fill="#8f8f8f"/><path d="M1442.60 367.02 L1459.50 367.02" stroke="#b4b4b4" stroke-width="0.80"/><path d="M1394.00 366.02 L1399.40 370.62 L1394.00 375.23Z" fill="#a4a9b4" stroke="#2f3440" stroke-width="0.90"/><path d="M1415.50 396.25 Q1423.50 387.05 1431.50 396.25 Q1423.50 405.45 1415.50 396.25Z" fill="#858585"/><circle cx="1423.50" cy="396.25" r="3.30" fill="none" stroke="#e4e4e4" stroke-width="1.30"/><circle cx="1423.50" cy="396.25" r="1.50" fill="#777"/><path d="M1442.00 389.45 L1449.00 389.45 L1450.60 391.65 L1459.50 391.65 L1459.50 403.05 L1442.00 403.05Z" fill="#8f8f8f"/><path d="M1442.60 392.65 L1459.50 392.65" stroke="#b4b4b4" stroke-width="0.80"/><path d="M1435.00 421.88 Q1443.00 412.68 1451.00 421.88 Q1443.00 431.07 1435.00 421.88Z" fill="#858585"/><circle cx="1443.00" cy="421.88" r="3.30" fill="none" stroke="#e4e4e4" stroke-width="1.30"/><circle cx="1443.00" cy="421.88" r="1.50" fill="#777"/><rect x="1462.50" y="415.38" width="13.00" height="13.00" fill="#fafafa" stroke="#4a9ae0" stroke-width="0.90" stroke-dasharray="1.40 1.00"/><path d="M1466.00 418.48 L1472.50 418.48 L1467.00 425.88Z" fill="none" stroke="#555" stroke-width="1.00"/><path d="M1469.60 429.27 L1475.40 423.48 L1477.40 425.48 L1471.60 431.07Z" fill="#f0a030"/><circle cx="1476.60" cy="424.07" r="1.60" fill="#e53935"/><rect x="2774" y="212" width="55.75" height="55" fill="#9fa5b0" fill-opacity="0.95"/><rect x="2784" y="221.25" width="35.75" height="35.75" fill="#959ca9" fill-opacity="0.9"/><text x="2778" y="245" font-family="DejaVu Sans Condensed, DejaVu Sans, sans-serif" font-size="11.6" fill="#838995" stroke="#838995" stroke-width="0.35" textLength="48.4" lengthAdjust="spacingAndGlyphs">SUPERIOR</text><text x="2773.8" y="207.8" font-family="Liberation Sans, sans-serif" font-size="13.8" font-weight="bold" fill="#3cb043">Y</text><path d="M2778.3 208.5V212" stroke="#3cb043" stroke-width="1"/><text x="2834.6" y="267.6" font-family="Liberation Sans, sans-serif" font-size="13.8" font-weight="bold" fill="#c43a3a">X</text><path d="M2830 262.5H2833" stroke="#c43a3a" stroke-width="1"/><text x="2766" y="275" font-family="Liberation Sans, sans-serif" font-size="13.8" font-weight="bold" fill="#2a3ad8">Z</text><path d="M2848.40 315.00 L2853.40 311.70 L2853.40 318.30Z" fill="#1e1e1e"/><path d="M2853.40 315.00 L2858.40 311.70 L2858.40 318.30Z" fill="#1e1e1e"/><text transform="translate(2860 516.4) rotate(-90)" font-family="Liberation Sans, sans-serif" font-size="13" fill="#2c2c2c" textLength="128.8" lengthAdjust="spacing">PALETA DE BOCETO</text></svg>
<div style="position:absolute;left:2677.75px;top:455.50px;width:282.25px;height:18.25px;background:#f5f5f5;border:1px solid #d0d0d0;box-sizing:border-box;box-shadow:0 1px 3px rgba(0,0,0,0.35);"></div>
<span style='position:absolute;left:2682.75px;top:456.32px;font:14.40px/17.28px "Liberation Sans",sans-serif;letter-spacing:0.000px;color:#1c1c1c;white-space:nowrap;-webkit-text-stroke:0.2px #1c1c1c;'>Especificar tamaño del rectángulo</span>
<div style="position:absolute;left:1330.00px;top:19.40px;width:8.00px;height:8.00px;background:#1c2a78;"></div>
<div style="position:absolute;left:2860.50px;top:19.40px;width:8.00px;height:8.00px;background:#1c2a78;"></div>
<div style="position:absolute;left:1330.00px;top:19.40px;width:1538.50px;height:28.20px;background:#edeef1;border-radius:7.0px 7.0px 0 0;"></div>
<div style="position:absolute;left:1338.50px;top:26.25px;width:13.00px;height:13.00px;background:#d2d2d4;border-radius:50%;box-shadow:inset 0 0 0 0.6px #c2c2c4;"></div>
<div style="position:absolute;left:1360.00px;top:26.25px;width:13.00px;height:13.00px;background:#d2d2d4;border-radius:50%;box-shadow:inset 0 0 0 0.6px #c2c2c4;"></div>
<div style="position:absolute;left:1381.50px;top:26.25px;width:13.00px;height:13.00px;background:#d2d2d4;border-radius:50%;box-shadow:inset 0 0 0 0.6px #c2c2c4;"></div>
<span style='position:absolute;left:1833.00px;top:25.80px;font:bold 12.57px/15.08px "Liberation Sans",sans-serif;letter-spacing:0.000px;color:#3e3e3e;white-space:nowrap;transform:scaleX(1.1628);transform-origin:0 0;'>MT03_LÁSER* (ANDRE_FUSION360) - Autodesk Fusion (Licencia educativa)</span>
<div style="position:absolute;left:1330.00px;top:47.60px;width:1538.50px;height:120.80px;background:#f1f1f1;"></div>
<div style="position:absolute;left:1330.00px;top:168.40px;width:1538.50px;height:4.20px;background:#f6f6f6;border-top:1px solid #dcdcdc;box-sizing:border-box;"></div>
<div style="position:absolute;left:1330.00px;top:47.60px;width:1538.50px;height:33.90px;background:#cdcdcd;box-shadow:inset 0 1.5px 1.5px -0.5px #b4b4b4;"></div>
<div style="position:absolute;left:1537.90px;top:52.30px;width:41.90px;height:29.20px;background:#bcbcbc;border-radius:3.5px 3.5px 0 0;"></div>
<div style="position:absolute;left:1583.80px;top:52.30px;width:1053.20px;height:30.20px;background:#f1f1f1;border-radius:4.0px 4.0px 0 0;"></div>
<div style="position:absolute;left:2641.30px;top:52.30px;width:29.80px;height:29.20px;background:#bcbcbc;border-radius:3.5px 3.5px 0 0;"></div>
<div style="position:absolute;left:2830.00px;top:51.60px;width:26.60px;height:26.60px;background:#f1f1f1;border-radius:50%;"></div>
<span style='position:absolute;left:2834.00px;top:57.51px;font:13.41px/16.09px "Liberation Sans",sans-serif;letter-spacing:-1.100px;color:#444;white-space:nowrap;'>AL</span>
<svg style="position:absolute;left:0.00px;top:0.00px;pointer-events:none;" width="2888.00" height="816.00" viewBox="0 0 2888 816"><rect x="1340.05" y="57.35" width="4.30" height="4.30" rx="0.50" fill="#686868"/><rect x="1345.35" y="57.35" width="4.30" height="4.30" rx="0.50" fill="#686868"/><rect x="1350.65" y="57.35" width="4.30" height="4.30" rx="0.50" fill="#686868"/><rect x="1340.05" y="62.65" width="4.30" height="4.30" rx="0.50" fill="#686868"/><rect x="1345.35" y="62.65" width="4.30" height="4.30" rx="0.50" fill="#686868"/><rect x="1350.65" y="62.65" width="4.30" height="4.30" rx="0.50" fill="#686868"/><rect x="1340.05" y="67.95" width="4.30" height="4.30" rx="0.50" fill="#686868"/><rect x="1345.35" y="67.95" width="4.30" height="4.30" rx="0.50" fill="#686868"/><rect x="1350.65" y="67.95" width="4.30" height="4.30" rx="0.50" fill="#686868"/><path d="M1376.20 57.10 Q1376.20 56.10 1377.20 56.10 L1384.80 56.10 L1389.80 61.10 L1389.80 72.90 L1376.20 72.90 Z" fill="#686868"/><path d="M1385.40 57.10 L1385.40 60.50 L1388.80 60.50 Z" fill="#cdcdcd"/><path d="M1396.00 62.00 L1403.60 62.00 L1399.80 68.40 Z" fill="#686868"/><path d="M1423.80 58.40 Q1423.80 57.40 1424.80 57.40 L1437.80 57.40 Q1438.80 57.40 1438.80 58.40 L1438.80 72.20 L1426.30 72.20 L1423.80 69.70 Z" fill="#686868"/><rect x="1427.40" y="58.60" width="7.40" height="4.60" fill="#cdcdcd"/><rect x="1432.00" y="58.60" width="1.80" height="3.60" fill="#686868"/><path d="M1428.00 72.20 L1428.00 67.20 L1434.80 67.20 L1434.80 72.20" fill="none" stroke="#cdcdcd" stroke-width="1.50"/><path d="M1461.50 63.60 C1466.90 63.40 1472.50 64.70 1473.10 70.80" fill="none" stroke="#686868" stroke-width="2.00" stroke-linecap="round"/><path d="M1465.30 59.20 L1460.70 63.60 L1465.30 68.00" fill="none" stroke="#686868" stroke-width="2.00" stroke-linecap="round" stroke-linejoin="round"/><path d="M1481.10 62.00 L1488.70 62.00 L1484.90 68.40 Z" fill="#686868"/><path d="M1513.70 63.60 C1508.30 63.40 1502.70 64.70 1502.10 70.80" fill="none" stroke="#9a9a9a" stroke-width="2.00" stroke-linecap="round"/><path d="M1509.90 59.20 L1514.50 63.60 L1509.90 68.00" fill="none" stroke="#9a9a9a" stroke-width="2.00" stroke-linecap="round" stroke-linejoin="round"/><path d="M1523.00 61.40 L1530.60 61.40 L1526.80 67.80 Z" fill="#a8a8a8"/><path d="M1552.40 69.00 L1560.40 61.50 L1563.60 64.50 L1563.60 62.40 L1565.60 62.40 L1565.60 66.40 L1568.40 69.00 L1566.40 69.00 L1566.40 75.20 L1562.00 75.20 L1562.00 71.20 L1558.80 71.20 L1558.80 75.20 L1554.40 75.20 L1554.40 69.00 Z" fill="#7a7a7a"/><path d="M2620.50 62.60 L2629.30 71.40 M2629.30 62.60 L2620.50 71.40" stroke="#777" stroke-width="1.35" fill="none"/><path d="M2650.30 66.70 L2663.90 66.70 M2657.10 59.90 L2657.10 73.50" stroke="#828282" stroke-width="3.00" fill="none"/><circle cx="2692.80" cy="64.60" r="8.30" fill="#686868"/><path d="M2688.20 69.00 A6.00 6.00 0 0 1 2690.80 58.70" fill="none" stroke="#cdcdcd" stroke-width="1.50"/><path d="M2695.00 58.40 L2692.40 61.20 M2698.60 61.80 L2695.80 64.40" stroke="#cdcdcd" stroke-width="1.50" stroke-linecap="round" fill="none"/><path d="M2687.40 70.20 L2685.20 72.40" stroke="#cdcdcd" stroke-width="2.00" fill="none"/><path d="M2698.00 66.00 A5.60 5.60 0 0 1 2691.60 70.20" fill="none" stroke="#cdcdcd" stroke-width="1.20"/><circle cx="2728.30" cy="64.60" r="8.00" fill="none" stroke="#686868" stroke-width="1.00"/><circle cx="2728.30" cy="64.60" r="6.40" fill="#686868"/><path d="M2727.30 61.00 L2727.30 65.80 L2731.90 65.80" fill="none" stroke="#d4d4d4" stroke-width="1.50"/><path d="M2756.60 69.60 C2759.00 67.60 2758.80 64.60 2759.00 62.20 C2759.20 59.00 2761.20 57.60 2762.70 57.40 L2762.70 56.20 L2764.50 56.20 L2764.50 57.40 C2766.00 57.60 2768.00 59.00 2768.20 62.20 C2768.40 64.60 2768.20 67.60 2770.60 69.60 Z" fill="#686868"/><path d="M2761.40 71.00 L2765.80 71.00 C2765.60 73.00 2761.60 73.00 2761.40 71.00 Z" fill="#686868"/><circle cx="2799.20" cy="64.60" r="8.40" fill="#686868"/><path d="M2796.30 62.20 C2796.30 58.20 2802.40 58.20 2802.30 62.00 C2802.20 64.40 2799.20 64.40 2799.20 67.00" fill="none" stroke="#e6e6e6" stroke-width="1.90"/><circle cx="2799.20" cy="69.80" r="1.25" fill="#e6e6e6"/></svg>
<span style='position:absolute;left:2072.50px;top:61.00px;font:12.69px/15.23px "DejaVu Sans","Liberation Sans",sans-serif;letter-spacing:-0.346px;color:#444;white-space:nowrap;-webkit-text-stroke:0.2px #444;'>MT03_LÁSER*</span>
<svg style="position:absolute;left:2051.25px;top:59.30px;" width="16.00" height="16.96" viewBox="0 0 16 17"><path d="M8 0.4 L15.6 4.2 L15.6 12.6 L8 16.6 L0.4 12.6 L0.4 4.2 Z" fill="#f08a2a"/><path d="M8 0.4 L15.6 4.2 L8 8.2 L0.4 4.2 Z" fill="#f7a850"/><path d="M8 8.2 L15.6 4.2 L15.6 12.6 L8 16.6 Z" fill="#e06f14"/></svg>
<div style="position:absolute;left:1343.00px;top:93.25px;width:117.50px;height:63.75px;background:#f4f4f4;border:1px solid #d2d2d2;border-radius:4.5px;box-sizing:border-box;"></div>
<span style='position:absolute;left:1373.75px;top:116.90px;font:bold 12.00px/14.40px "DejaVu Sans","Liberation Sans",sans-serif;letter-spacing:-1.305px;color:#3a3a3a;white-space:nowrap;'>DISEÑO</span>
<svg style="position:absolute;left:0.00px;top:0.00px;pointer-events:none;" width="2888.00" height="816.00" viewBox="0 0 2888 816"><path d="M1425.70 122.85 L1432.30 122.85 L1429.00 127.05 Z" fill="#3a3a3a"/></svg>
<div style="position:absolute;left:2216.75px;top:82.00px;width:77.00px;height:24.25px;background:#cde9f6;border-bottom:3.0px solid #3f97d9;box-sizing:border-box;"></div>
<span style='position:absolute;left:1491.50px;top:87.03px;font:11.39px/13.66px "DejaVu Sans","Liberation Sans",sans-serif;letter-spacing:-0.174px;color:#3c3c3c;white-space:nowrap;-webkit-text-stroke:0.2px #3c3c3c;'>SOLIDO</span>
<span style='position:absolute;left:1585.75px;top:87.03px;font:11.39px/13.66px "DejaVu Sans","Liberation Sans",sans-serif;letter-spacing:-0.327px;color:#3c3c3c;white-space:nowrap;-webkit-text-stroke:0.2px #3c3c3c;'>SUPERFICIE</span>
<span style='position:absolute;left:1697.00px;top:87.03px;font:11.39px/13.66px "DejaVu Sans","Liberation Sans",sans-serif;letter-spacing:0.101px;color:#3c3c3c;white-space:nowrap;-webkit-text-stroke:0.2px #3c3c3c;'>MALLA</span>
<span style='position:absolute;left:1786.25px;top:87.03px;font:11.39px/13.66px "DejaVu Sans","Liberation Sans",sans-serif;letter-spacing:0.256px;color:#3c3c3c;white-space:nowrap;-webkit-text-stroke:0.2px #3c3c3c;'>CHAPA</span>
<span style='position:absolute;left:1875.50px;top:87.03px;font:11.39px/13.66px "DejaVu Sans","Liberation Sans",sans-serif;letter-spacing:-0.101px;color:#3c3c3c;white-space:nowrap;-webkit-text-stroke:0.2px #3c3c3c;'>PLÁSTICO</span>
<span style='position:absolute;left:1981.25px;top:87.03px;font:11.39px/13.66px "DejaVu Sans","Liberation Sans",sans-serif;letter-spacing:-0.019px;color:#3c3c3c;white-space:nowrap;-webkit-text-stroke:0.2px #3c3c3c;'>ADMINISTRAR</span>
<span style='position:absolute;left:2113.25px;top:87.03px;font:11.39px/13.66px "DejaVu Sans","Liberation Sans",sans-serif;letter-spacing:-0.127px;color:#3c3c3c;white-space:nowrap;-webkit-text-stroke:0.2px #3c3c3c;'>UTILIDADES</span>
<span style='position:absolute;left:2229.50px;top:87.03px;font:bold 11.39px/13.66px "DejaVu Sans","Liberation Sans",sans-serif;letter-spacing:-0.387px;color:#2e8fdb;white-space:nowrap;'>BOCETO</span>
<div style="position:absolute;left:2705.25px;top:105.50px;width:143.75px;height:62.70px;background:#cdeaf6;"></div>
<span style='position:absolute;left:1583.00px;top:150.72px;font:11.66px/13.99px "DejaVu Sans","Liberation Sans",sans-serif;letter-spacing:-0.672px;color:#3c3c3c;white-space:nowrap;-webkit-text-stroke:0.2px #3c3c3c;'>CREAR</span>
<span style='position:absolute;left:1813.00px;top:150.72px;font:11.66px/13.99px "DejaVu Sans","Liberation Sans",sans-serif;letter-spacing:-0.190px;color:#3c3c3c;white-space:nowrap;-webkit-text-stroke:0.2px #3c3c3c;'>MODIFICAR</span>
<span style='position:absolute;left:2045.00px;top:150.72px;font:11.66px/13.99px "DejaVu Sans","Liberation Sans",sans-serif;letter-spacing:-0.431px;color:#3c3c3c;white-space:nowrap;-webkit-text-stroke:0.2px #3c3c3c;'>RESTRICCIONES</span>
<span style='position:absolute;left:2256.25px;top:150.72px;font:11.66px/13.99px "DejaVu Sans","Liberation Sans",sans-serif;letter-spacing:-0.274px;color:#3c3c3c;white-space:nowrap;-webkit-text-stroke:0.2px #3c3c3c;'>CONFIGURAR</span>
<span style='position:absolute;left:2373.25px;top:150.72px;font:11.66px/13.99px "DejaVu Sans","Liberation Sans",sans-serif;letter-spacing:-0.310px;color:#3c3c3c;white-space:nowrap;-webkit-text-stroke:0.2px #3c3c3c;'>INSPECCIONAR</span>
<span style='position:absolute;left:2498.25px;top:150.72px;font:11.66px/13.99px "DejaVu Sans","Liberation Sans",sans-serif;letter-spacing:-0.104px;color:#3c3c3c;white-space:nowrap;-webkit-text-stroke:0.2px #3c3c3c;'>INSERTAR</span>
<span style='position:absolute;left:2600.25px;top:150.72px;font:11.66px/13.99px "DejaVu Sans","Liberation Sans",sans-serif;letter-spacing:-0.408px;color:#3c3c3c;white-space:nowrap;-webkit-text-stroke:0.2px #3c3c3c;'>SELECCIONAR</span>
<span style='position:absolute;left:2717.75px;top:150.72px;font:11.66px/13.99px "DejaVu Sans","Liberation Sans",sans-serif;letter-spacing:-0.241px;color:#3c3c3c;white-space:nowrap;-webkit-text-stroke:0.2px #3c3c3c;'>TERMINAR BOCETO</span>
<svg style="position:absolute;left:0.00px;top:0.00px;pointer-events:none;" width="2888.00" height="816.00" viewBox="0 0 2888 816"><path d="M1624.20 155.70 L1629.80 155.70 L1627.00 159.70 Z" fill="#3c3c3c"/><path d="M1881.45 155.70 L1887.05 155.70 L1884.25 159.70 Z" fill="#3c3c3c"/><path d="M2137.20 155.70 L2142.80 155.70 L2140.00 159.70 Z" fill="#3c3c3c"/><path d="M2334.70 155.70 L2340.30 155.70 L2337.50 159.70 Z" fill="#3c3c3c"/><path d="M2460.95 155.70 L2466.55 155.70 L2463.75 159.70 Z" fill="#3c3c3c"/><path d="M2556.70 155.70 L2562.30 155.70 L2559.50 159.70 Z" fill="#3c3c3c"/><path d="M2682.45 155.70 L2688.05 155.70 L2685.25 159.70 Z" fill="#3c3c3c"/><path d="M2831.20 155.70 L2836.80 155.70 L2834.00 159.70 Z" fill="#3c3c3c"/><path d="M1753.75 110.00 L1753.75 163.00" stroke="#d6d6d6" stroke-width="1.30"/><path d="M1950.50 110.00 L1950.50 163.00" stroke="#d6d6d6" stroke-width="1.30"/><path d="M2240.00 110.00 L2240.00 163.00" stroke="#d6d6d6" stroke-width="1.30"/><path d="M2357.50 110.00 L2357.50 163.00" stroke="#d6d6d6" stroke-width="1.30"/><path d="M2479.50 110.00 L2479.50 163.00" stroke="#d6d6d6" stroke-width="1.30"/><path d="M2584.50 110.00 L2584.50 163.00" stroke="#d6d6d6" stroke-width="1.30"/><g transform="translate(1477.00 81.50) scale(1.0000)"><path d="M 3.69 53.96 L 21.71 53.96" fill="none" stroke="#666" stroke-width="1.4" /><path d="M26.77 37.19 A8.11 8.44 0 0 1 26.77 54.19" fill="none" stroke="#666" stroke-width="1.4" /><rect x="0.21" y="52.16" width="3.6" height="3.6" fill="#3c96e6"/><rect x="21.60" y="52.16" width="3.6" height="3.6" fill="#3c96e6"/><rect x="21.60" y="36.06" width="3.6" height="3.6" fill="#3c96e6"/></g><g transform="translate(1520.00 81.50) scale(1.0000)"><rect x="0.10" y="25.03" width="41.88" height="41.31" fill="#4197d7"/><rect x="5.16" y="34.82" width="30.62" height="21.05" fill="none" stroke="#c9dff2" stroke-width="1.4" /><rect x="3.36" y="33.02" width="3.6" height="3.6" fill="#7fc0f5"/><rect x="33.76" y="54.07" width="3.6" height="3.6" fill="#7fc0f5"/></g><g transform="translate(1570.00 81.50) scale(1.0000)"><circle cx="16.74" cy="45.18" r="16.44" fill="none" stroke="#666" stroke-width="1.4" /><path d="M 8.63 53.40 L 24.96 37.07" fill="none" stroke="#3a96e0" stroke-width="1.6" /><path d="M 26.98 35.39 L 25.86 40.45 L 21.92 36.51 Z M 6.50 55.42 L 7.62 50.36 L 11.56 54.30 Z" fill="#3a96e0"/><rect x="15.14" y="43.58" width="3.2" height="3.2" fill="#3c96e6"/></g><g transform="translate(1616.00 81.50) scale(1.0000)"><path d="M 1.36 59.03 C 1.70 52.27 3.16 44.96 6.20 41.58" fill="none" stroke="#666" stroke-width="1.4" /><path d="M 11.04 40.45 C 16.11 42.70 19.48 49.46 24.21 51.37" fill="none" stroke="#666" stroke-width="1.4" /><path d="M 29.05 50.02 C 32.43 45.52 33.22 38.76 33.11 32.57" fill="none" stroke="#666" stroke-width="1.4" /><rect x="-0.10" y="59.25" width="3.6" height="3.6" fill="#3c96e6"/><rect x="6.43" y="38.09" width="3.6" height="3.6" fill="#3c96e6"/><rect x="24.44" y="49.91" width="3.6" height="3.6" fill="#3c96e6"/><rect x="31.19" y="28.52" width="3.6" height="3.6" fill="#3c96e6"/></g><g transform="translate(1663.00 81.50) scale(1.0000)"><path d="M 15.26 30.32 L 15.26 61.05 M 14.81 32.23 L 0.40 61.05 L 15.26 61.05" fill="none" stroke="#666" stroke-width="1.5" /><path d="M 17.29 31.45 L 17.29 61.05 L 31.92 61.05 Z" fill="none" stroke="#3a96e0" stroke-width="1.3" /></g><g transform="translate(1708.75 81.50) scale(1.0000)"><path d="M 0.47 30.88 L 0.47 60.38 M 33.68 30.88 L 33.68 60.38" fill="none" stroke="#666" stroke-width="1.5" /><path d="M 3.29 39.89 L 30.87 39.89" fill="none" stroke="#3a96e0" stroke-width="1.5" /><path d="M 1.03 39.89 L 5.31 37.41 L 5.31 42.37 Z M 33.01 39.89 L 28.73 37.41 L 28.73 42.37 Z" fill="#3a96e0"/></g><g transform="translate(1766.75 81.50) scale(1.0000)"><path d="M0.51 48.67 A19.70 19.70 0 0 1 20.21 29.08" fill="none" stroke="#3a96e0" stroke-width="1.5" /><path d="M 0.51 50.58 L 0.51 62.40 M 21.90 29.19 L 34.28 29.19" fill="none" stroke="#666" stroke-width="1.5" /></g><g transform="translate(1812.50 81.50) scale(1.0000)"><path d="M 0.69 31.67 L 17.24 31.67" fill="none" stroke="#7db8ee" stroke-width="1.5" stroke-dasharray="3.4 1.6"/><path d="M 26.81 31.67 L 34.69 31.67" fill="none" stroke="#999" stroke-width="1.5" /><path d="M 9.36 35.61 L 10.14 40.79 L 19.49 52.27 L 22.30 49.12 Z" fill="#2b2b2b"/><path d="M 20.05 28.86 L 24.33 33.13 L 24.78 52.27 L 21.18 52.27 Z" fill="#2b2b2b"/><ellipse cx="20.61" cy="56.55" rx="3.38" ry="5.18" transform="rotate(12 20.61 56.55)" fill="none" stroke="#2b2b2b" stroke-width="2.6" /><ellipse cx="28.16" cy="54.30" rx="3.15" ry="4.95" transform="rotate(-48 28.16 54.30)" fill="none" stroke="#2b2b2b" stroke-width="2.6" /><circle cx="21.51" cy="49.12" r="1.1" fill="#fff"/></g><g transform="translate(1858.75 81.50) scale(1.0000)"><path d="M35.15 33.36 L13.20 33.36 A12.27 12.27 0 0 0 13.20 57.90 L35.15 57.90" fill="none" stroke="#3a96e0" stroke-width="1.6" /><path d="M35.15 38.99 L14.33 38.99 A6.75 6.75 0 0 0 14.33 52.50 L35.15 52.50" fill="none" stroke="#666" stroke-width="1.5" /></g><g transform="translate(1905.50 81.50) scale(1.0000)"><path d="M 0.56 62.40 C 0.79 56.78 1.58 51.15 2.70 47.21" fill="none" stroke="#666" stroke-width="1.4" /><path d="M 2.70 47.21 C 5.29 37.64 10.36 37.64 15.42 44.39 C 20.49 51.15 26.12 57.90 31.97 47.21" fill="none" stroke="#3a96e0" stroke-width="1.5" /><path d="M 31.97 46.64 C 33.10 41.01 34.00 34.26 34.22 28.63" fill="none" stroke="#666" stroke-width="1.4" /></g><g transform="translate(1963.75 81.50) scale(1.0000)"><path d="M 2.43 34.26 L 2.43 59.03 M -0.05 33.13 L 5.02 33.13 M -0.05 60.15 L 5.02 60.15" fill="none" stroke="#3a96e0" stroke-width="1.4" /><path d="M 2.43 33.70 L 0.51 37.64 L 4.34 37.64 Z M 2.43 59.59 L 0.51 55.65 L 4.34 55.65 Z" fill="#3a96e0"/><path d="M 8.96 34.82 L 8.96 59.03 L 32.60 59.03" fill="none" stroke="#666" stroke-width="1.8" /><path d="M 14.25 41.01 L 14.25 53.96 L 27.53 53.96" fill="none" stroke="#666" stroke-width="1.5" /><path d="M14.25 41.01 A13.28 12.95 0 0 1 27.53 53.96" fill="none" stroke="#666" stroke-width="1.5" /><rect x="7.46" y="33.32" width="3" height="3" fill="#666"/><rect x="7.26" y="57.33" width="3.4" height="3.4" fill="#666"/><rect x="31.10" y="57.53" width="3" height="3" fill="#666"/><rect x="12.75" y="39.51" width="3" height="3" fill="#666"/><rect x="12.75" y="52.46" width="3" height="3" fill="#666"/><rect x="26.03" y="52.46" width="3" height="3" fill="#666"/><path d="M 29.78 28.86 L 17.96 36.51 L 24.15 37.41 L 21.90 45.29 L 34.06 37.41 L 26.97 36.29 Z" fill="#f0a030"/></g><g transform="translate(2018.75 81.50) scale(1.0000)"><path d="M 7.99 32.57 L 7.99 48.33 M 10.47 32.01 L 10.47 48.33" fill="none" stroke="#8a8a8a" stroke-width="0.9" /><path d="M 3.15 32.57 L 7.43 35.61 M 3.15 36.74 L 7.43 39.78 M 3.15 40.90 L 7.43 43.94 M 3.15 45.07 L 7.43 48.11" fill="none" stroke="#d32f2f" stroke-width="1.5" /><path d="M 0.11 51.37 L 17.22 51.37" fill="none" stroke="#888" stroke-width="2.2" /><path d="M 0.11 54.30 L 17.22 54.30" fill="none" stroke="#d32f2f" stroke-width="1.3" /><path d="M 0.67 58.46 L 4.61 54.75 M 6.08 58.46 L 10.02 54.75 M 11.48 58.46 L 15.42 54.75" fill="none" stroke="#d32f2f" stroke-width="1.6" /></g><g transform="translate(2055.75 81.50) scale(1.0000)"><path d="M 1.92 28.86 L 1.92 59.59" fill="none" stroke="#d32f2f" stroke-width="1.6" /><path d="M 5.08 61.05 L 35.13 61.05" fill="none" stroke="#666" stroke-width="1.5" /><rect x="0.22" y="59.35" width="3.4" height="3.4" fill="#c62828"/></g><g transform="translate(2102.00 81.50) scale(1.0000)"><circle cx="13.20" cy="49.12" r="12.50" fill="none" stroke="#d32f2f" stroke-width="1.4" /><path d="M 12.30 29.76 L 33.69 50.58" fill="none" stroke="#666" stroke-width="1.4" /></g><g transform="translate(2154.50 81.50) scale(1.0000)"><rect x="0.55" y="38.43" width="21.61" height="4.28" fill="#c62828"/><rect x="0.55" y="48.90" width="21.61" height="4.28" fill="#666"/></g><g transform="translate(2199.25 81.50) scale(1.0000)"><path d="M 0.38 52.61 L 19.74 33.47" fill="none" stroke="#d32f2f" stroke-width="1.5" /><path d="M 5.78 58.13 L 25.15 38.99" fill="none" stroke="#666" stroke-width="1.4" /></g><g transform="translate(2258.75 81.50) scale(1.0000)"><path d="M 0.61 36.51 L 8.83 28.86 L 30.78 28.86 L 30.78 50.58 L 23.47 58.13 L 0.61 58.13 Z" fill="#dadada" stroke="#9a9a9a" stroke-width="0.9"/><path d="M 0.61 36.51 L 8.83 28.86 L 30.78 28.86 L 23.47 36.51 Z" fill="#f2f2f2" stroke="#9a9a9a" stroke-width="0.7"/><path d="M 23.47 36.51 L 30.78 28.86 L 30.78 50.58 L 23.47 58.13 Z" fill="#bdbdbd"/><rect x="18.96" y="49.46" width="18.01" height="14.63" fill="#f1f1f1" opacity="0.6"/><path d="M 20.09 53.17 L 35.29 53.17 M 20.09 59.48 L 35.29 59.48" fill="none" stroke="#666" stroke-width="1.7" /><path d="M 24.37 50.02 L 24.37 56.33" fill="none" stroke="#3a96e0" stroke-width="2.2" stroke-linecap="round"/><path d="M 30.78 56.33 L 30.78 62.63" fill="none" stroke="#666" stroke-width="2.2" /></g><g transform="translate(2305.00 81.50) scale(1.0000)"><rect x="1.19" y="29.19" width="31.52" height="29.83" fill="#f4f4f4" stroke="#666" stroke-width="1.2"/><rect x="1.19" y="28.86" width="31.52" height="6.53" fill="#6a6a6a"/><rect x="3.11" y="31.11" width="3.94" height="2.03" fill="#eee"/><path d="M 4.57 38.99 L 29.34 38.99 L 29.34 54.75 L 4.57 54.75 Z M 4.57 44.39 L 29.34 44.39 M 4.57 49.57 L 29.34 49.57 M 10.20 38.99 L 10.20 54.75 M 15.49 38.99 L 15.49 54.75" fill="none" stroke="#666" stroke-width="1.3" /><rect x="18.87" y="49.46" width="18.01" height="14.63" fill="#f1f1f1" opacity="0.7"/><path d="M 19.99 53.17 L 35.19 53.17 M 19.99 59.48 L 35.19 59.48" fill="none" stroke="#666" stroke-width="1.7" /><path d="M 24.27 50.02 L 24.27 56.33" fill="none" stroke="#3a96e0" stroke-width="2.2" stroke-linecap="round"/><path d="M 30.69 56.33 L 30.69 62.63" fill="none" stroke="#666" stroke-width="2.2" /></g><g transform="translate(2404.50 81.50) scale(1.0000)"><rect x="0.42" y="47.77" width="30.17" height="6.53" fill="#f0a838"/><path d="M 0.98 37.41 L 0.98 46.64 M 30.03 37.41 L 30.03 46.64 M 3.80 42.14 L 27.44 42.14" fill="none" stroke="#666" stroke-width="1.3" /><path d="M 1.66 42.14 L 5.71 39.89 L 5.71 44.39 Z M 29.35 42.14 L 25.30 39.89 L 25.30 44.39 Z" fill="#666"/><path d="M 2.11 47.99 L 2.11 50.58 M 5.15 47.99 L 5.15 49.46 M 8.19 47.99 L 8.19 50.58 M 11.23 47.99 L 11.23 49.46 M 14.27 47.99 L 14.27 50.58 M 17.31 47.99 L 17.31 49.46 M 20.35 47.99 L 20.35 50.58 M 23.39 47.99 L 23.39 49.46 M 26.43 47.99 L 26.43 50.58 M 29.47 47.99 L 29.47 49.46" fill="none" stroke="#7a5a20" stroke-width="0.9" /></g><g transform="translate(2495.00 81.50) scale(1.0000)"><path d="M -0.02 32.01 Q -0.02 30.32 2.23 30.32 L 23.62 30.32 Q 25.87 30.32 25.87 32.23 L 25.87 38.20 L -0.02 38.20 Z" fill="#6ab4ec"/><path d="M -0.02 32.01 Q -0.02 30.32 2.23 30.32 L 8.42 30.32 L 6.74 38.20 L -0.02 38.20 Z" fill="#8accfa"/><path d="M 20.24 30.32 L 23.62 30.32 Q 25.87 30.32 25.87 32.23 L 25.87 38.20 L 19.68 38.20 Z" fill="#4a94d4"/><rect x="5.61" y="38.20" width="14.07" height="23.87" rx="1" fill="#74b8ee"/><path d="M 5.27 41.01 L 20.02 41.69 M 5.27 43.49 L 20.02 44.17 M 5.27 45.97 L 20.02 46.64 M 5.27 48.44 L 20.02 49.12 M 5.27 50.92 L 20.02 51.60 M 5.27 53.40 L 20.02 54.07 M 5.27 55.87 L 20.02 56.55 M 5.27 58.35 L 20.02 59.03 M 5.27 60.83 L 20.02 61.50" fill="none" stroke="#4f9ad8" stroke-width="0.9" /><path d="M 17.43 55.42 L 32.07 55.42 M 24.75 47.99 L 24.75 62.63" fill="none" stroke="#f1f1f1" stroke-width="5.6" /><path d="M 17.43 55.42 L 32.07 55.42 M 24.75 48.33 L 24.75 62.40" fill="none" stroke="#4caf50" stroke-width="4.0" /></g><g transform="translate(2539.75 81.50) scale(1.0000)"><rect x="0.41" y="29.76" width="30.96" height="30.40" fill="#86caff" stroke="#4a9ee0" stroke-width="0.8"/><path d="M 0.63 51.15 C 4.57 43.83 9.64 40.45 13.02 44.39 C 15.83 47.77 18.08 53.96 20.90 55.65 C 23.71 52.27 25.96 48.90 28.21 50.58 C 29.90 52.27 31.03 54.52 31.25 55.65 L 31.25 59.93 L 0.63 59.93 Z" fill="#4193cf"/><circle cx="22.92" cy="38.54" r="3.15" fill="#ffffc8"/></g><g transform="translate(2625.75 81.50) scale(1.0000)"><path d="M 0.50 39.89 Q 0.84 33.13 7.59 31.11 L 22.79 31.11 L 32.92 41.01 L 14.91 41.01 Q 10.97 41.58 10.63 47.77 L 10.63 58.46 L 0.50 48.33 Z" fill="#f6f6f6" stroke="#666" stroke-width="1.1"/><path d="M 7.59 31.11 L 22.79 31.11 L 32.92 41.01 L 14.91 41.01 Q 12.66 41.01 11.53 42.70 L 4.21 33.13 Q 5.34 31.78 7.59 31.11 Z" fill="#5cc785"/><path d="M 14.35 31.22 L 23.69 41.01" fill="none" stroke="#3a9a5c" stroke-width="0.8" /><path d="M 0.50 39.89 L 10.63 49.46" fill="none" stroke="#666" stroke-width="1.0" /><path d="M 26.73 51.15 L 33.15 45.29 L 34.61 47.21 L 28.42 52.84 Z" fill="#777"/><path d="M 15.47 60.15 C 19.41 55.65 21.66 52.27 25.60 52.27 C 27.85 53.96 27.29 57.34 24.48 59.03 C 21.66 60.38 18.29 60.38 15.47 60.15 Z" fill="#a86a28"/></g><g transform="translate(2742.50 81.50) scale(1.0000)"><circle cx="34.15" cy="45.86" r="16.6" fill="#69cd3b"/><path d="M 25.93 45.52 L 32.35 52.27 L 43.15 40.79" fill="none" stroke="#fff" stroke-width="3.9" /></g></svg>
</div>
</body></html>
